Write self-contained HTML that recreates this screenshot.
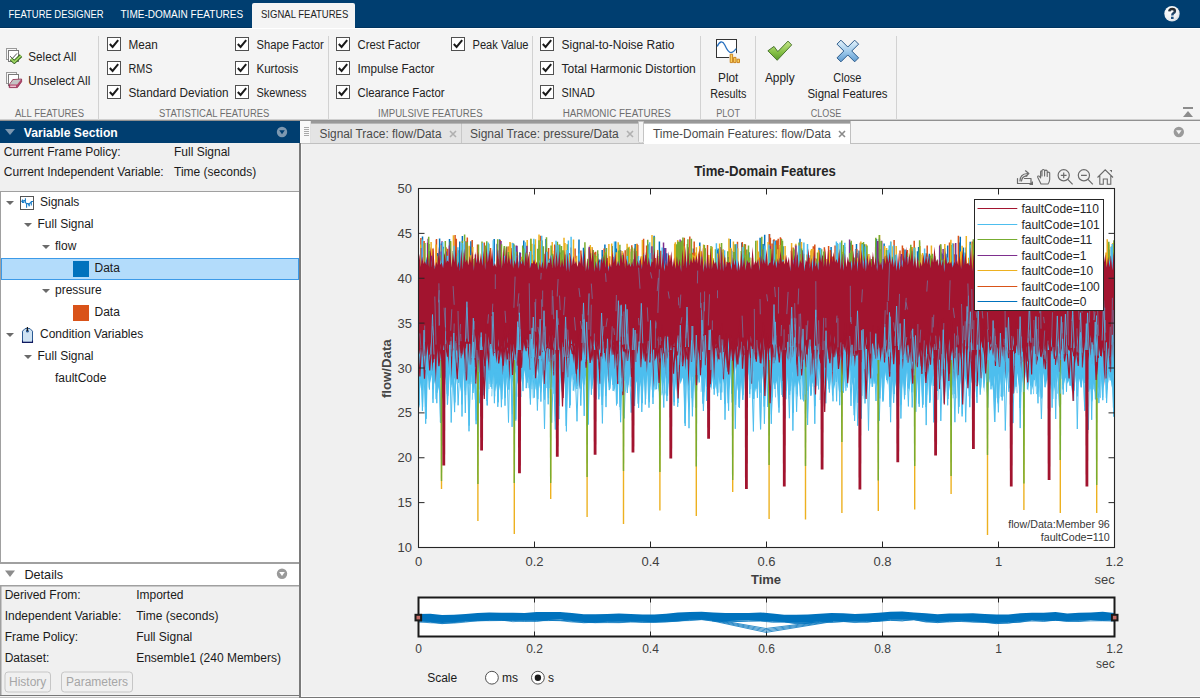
<!DOCTYPE html>
<html><head><meta charset="utf-8"><title>Feature Designer</title>
<style>html,body{margin:0;padding:0;width:1200px;height:698px;overflow:hidden;background:#f0f0f0}svg{display:block}text{font-family:"Liberation Sans",sans-serif}</style>
</head><body>
<svg width="1200" height="698" viewBox="0 0 1200 698">
<defs><clipPath id="axclip"><rect x="418.5" y="188.5" width="696" height="359"/></clipPath></defs>
<rect x="0" y="0" width="1200" height="698" fill="#f0f0f0"/>
<rect x="0" y="0" width="1200" height="28" fill="#003e70"/>
<rect x="0" y="27" width="1200" height="1" fill="#00345f"/>
<rect x="0" y="28" width="1200" height="1" fill="#ffffff"/>
<text x="8.5" y="18" font-size="11" fill="#ffffff" textLength="95" lengthAdjust="spacingAndGlyphs">FEATURE DESIGNER</text>
<text x="120.5" y="18" font-size="11" fill="#ffffff" textLength="122.7" lengthAdjust="spacingAndGlyphs">TIME-DOMAIN FEATURES</text>
<path d="M252 28 V5 Q252 3 254 3 H353 Q355 3 355 5 V28 Z" fill="#f4f4f4"/>
<text x="261" y="18" font-size="11" fill="#222" textLength="87.3" lengthAdjust="spacingAndGlyphs">SIGNAL FEATURES</text>
<defs><radialGradient id="gH" cx="0.4" cy="0.35" r="0.7"><stop offset="0" stop-color="#ffffff"/><stop offset="0.7" stop-color="#eef0f2"/><stop offset="1" stop-color="#cfd8e0"/></radialGradient><linearGradient id="gQ" x1="0" y1="0" x2="0" y2="1"><stop offset="0" stop-color="#2a2a2a"/><stop offset="1" stop-color="#1d4f80"/></linearGradient></defs>
<circle cx="1172" cy="13.8" r="7.7" fill="url(#gH)"/>
<path d="M1169.3 11.4 Q1169.5 8.9 1172.2 8.9 Q1174.9 8.9 1174.9 11 Q1174.9 12.4 1173.4 13.3 Q1172.3 14 1172.3 15.4" fill="none" stroke="url(#gQ)" stroke-width="2.5"/>
<rect x="1171" y="16.7" width="2.6" height="2.3" fill="#1d4f80"/>
<rect x="0" y="29" width="1200" height="91" fill="#f4f4f4"/>
<rect x="0" y="119.7" width="1200" height="1.1" fill="#7a7a7a"/>
<rect x="98" y="36" width="1" height="84" fill="#d2d2d2"/>
<rect x="328" y="36" width="1" height="84" fill="#d2d2d2"/>
<rect x="532" y="36" width="1" height="84" fill="#d2d2d2"/>
<rect x="700" y="36" width="1" height="84" fill="#d2d2d2"/>
<rect x="755" y="36" width="1" height="84" fill="#d2d2d2"/>
<rect x="896" y="36" width="1" height="84" fill="#d2d2d2"/>
<rect x="107.5" y="37.5" width="13" height="13" fill="#ffffff" stroke="#505050" stroke-width="1"/>
<path d="M109.8 44 L112.6 47 L118.2 40.2" fill="none" stroke="#1a1a1a" stroke-width="2"/>
<text x="128.5" y="49" font-size="12" fill="#222" textLength="29.3" lengthAdjust="spacingAndGlyphs">Mean</text>
<rect x="107.5" y="61.5" width="13" height="13" fill="#ffffff" stroke="#505050" stroke-width="1"/>
<path d="M109.8 68 L112.6 71 L118.2 64.2" fill="none" stroke="#1a1a1a" stroke-width="2"/>
<text x="128.5" y="73" font-size="12" fill="#222" textLength="24" lengthAdjust="spacingAndGlyphs">RMS</text>
<rect x="107.5" y="85.5" width="13" height="13" fill="#ffffff" stroke="#505050" stroke-width="1"/>
<path d="M109.8 92 L112.6 95 L118.2 88.2" fill="none" stroke="#1a1a1a" stroke-width="2"/>
<text x="128.5" y="97" font-size="12" fill="#222" textLength="100" lengthAdjust="spacingAndGlyphs">Standard Deviation</text>
<rect x="235.5" y="37.5" width="13" height="13" fill="#ffffff" stroke="#505050" stroke-width="1"/>
<path d="M237.8 44 L240.6 47 L246.2 40.2" fill="none" stroke="#1a1a1a" stroke-width="2"/>
<text x="256.5" y="49" font-size="12" fill="#222" textLength="67.3" lengthAdjust="spacingAndGlyphs">Shape Factor</text>
<rect x="235.5" y="61.5" width="13" height="13" fill="#ffffff" stroke="#505050" stroke-width="1"/>
<path d="M237.8 68 L240.6 71 L246.2 64.2" fill="none" stroke="#1a1a1a" stroke-width="2"/>
<text x="256.5" y="73" font-size="12" fill="#222" textLength="41.7" lengthAdjust="spacingAndGlyphs">Kurtosis</text>
<rect x="235.5" y="85.5" width="13" height="13" fill="#ffffff" stroke="#505050" stroke-width="1"/>
<path d="M237.8 92 L240.6 95 L246.2 88.2" fill="none" stroke="#1a1a1a" stroke-width="2"/>
<text x="256.5" y="97" font-size="12" fill="#222" textLength="50" lengthAdjust="spacingAndGlyphs">Skewness</text>
<rect x="336.5" y="37.5" width="13" height="13" fill="#ffffff" stroke="#505050" stroke-width="1"/>
<path d="M338.8 44 L341.6 47 L347.2 40.2" fill="none" stroke="#1a1a1a" stroke-width="2"/>
<text x="357.5" y="49" font-size="12" fill="#222" textLength="62.5" lengthAdjust="spacingAndGlyphs">Crest Factor</text>
<rect x="336.5" y="61.5" width="13" height="13" fill="#ffffff" stroke="#505050" stroke-width="1"/>
<path d="M338.8 68 L341.6 71 L347.2 64.2" fill="none" stroke="#1a1a1a" stroke-width="2"/>
<text x="357.5" y="73" font-size="12" fill="#222" textLength="77" lengthAdjust="spacingAndGlyphs">Impulse Factor</text>
<rect x="336.5" y="85.5" width="13" height="13" fill="#ffffff" stroke="#505050" stroke-width="1"/>
<path d="M338.8 92 L341.6 95 L347.2 88.2" fill="none" stroke="#1a1a1a" stroke-width="2"/>
<text x="357.5" y="97" font-size="12" fill="#222" textLength="87" lengthAdjust="spacingAndGlyphs">Clearance Factor</text>
<rect x="451.5" y="37.5" width="13" height="13" fill="#ffffff" stroke="#505050" stroke-width="1"/>
<path d="M453.8 44 L456.6 47 L462.2 40.2" fill="none" stroke="#1a1a1a" stroke-width="2"/>
<text x="472.5" y="49" font-size="12" fill="#222" textLength="56" lengthAdjust="spacingAndGlyphs">Peak Value</text>
<rect x="540.5" y="37.5" width="13" height="13" fill="#ffffff" stroke="#505050" stroke-width="1"/>
<path d="M542.8 44 L545.6 47 L551.2 40.2" fill="none" stroke="#1a1a1a" stroke-width="2"/>
<text x="561.5" y="49" font-size="12" fill="#222" textLength="113" lengthAdjust="spacingAndGlyphs">Signal-to-Noise Ratio</text>
<rect x="540.5" y="61.5" width="13" height="13" fill="#ffffff" stroke="#505050" stroke-width="1"/>
<path d="M542.8 68 L545.6 71 L551.2 64.2" fill="none" stroke="#1a1a1a" stroke-width="2"/>
<text x="561.5" y="73" font-size="12" fill="#222" textLength="134.3" lengthAdjust="spacingAndGlyphs">Total Harmonic Distortion</text>
<rect x="540.5" y="85.5" width="13" height="13" fill="#ffffff" stroke="#505050" stroke-width="1"/>
<path d="M542.8 92 L545.6 95 L551.2 88.2" fill="none" stroke="#1a1a1a" stroke-width="2"/>
<text x="561.5" y="97" font-size="12" fill="#222" textLength="33.3" lengthAdjust="spacingAndGlyphs">SINAD</text>
<text x="49.5" y="116.7" font-size="10" fill="#6e6e6e" text-anchor="middle" textLength="69" lengthAdjust="spacingAndGlyphs">ALL FEATURES</text>
<text x="214.2" y="116.7" font-size="10" fill="#6e6e6e" text-anchor="middle" textLength="110.3" lengthAdjust="spacingAndGlyphs">STATISTICAL FEATURES</text>
<text x="430.3" y="116.7" font-size="10" fill="#6e6e6e" text-anchor="middle" textLength="104.5" lengthAdjust="spacingAndGlyphs">IMPULSIVE FEATURES</text>
<text x="616.8" y="116.7" font-size="10" fill="#6e6e6e" text-anchor="middle" textLength="108.3" lengthAdjust="spacingAndGlyphs">HARMONIC FEATURES</text>
<text x="728.1" y="116.7" font-size="10" fill="#6e6e6e" text-anchor="middle" textLength="23.8" lengthAdjust="spacingAndGlyphs">PLOT</text>
<text x="826" y="116.7" font-size="10" fill="#6e6e6e" text-anchor="middle" textLength="30.5" lengthAdjust="spacingAndGlyphs">CLOSE</text>
<text x="28.3" y="60.5" font-size="12" fill="#222" textLength="48" lengthAdjust="spacingAndGlyphs">Select All</text>
<text x="28.3" y="84.5" font-size="12" fill="#222" textLength="62" lengthAdjust="spacingAndGlyphs">Unselect All</text>
<text x="728.2" y="82" font-size="12" fill="#222" text-anchor="middle" textLength="20.3" lengthAdjust="spacingAndGlyphs">Plot</text>
<text x="728.3" y="98" font-size="12" fill="#222" text-anchor="middle" textLength="36" lengthAdjust="spacingAndGlyphs">Results</text>
<text x="779.8" y="82" font-size="12" fill="#222" text-anchor="middle" textLength="29.7" lengthAdjust="spacingAndGlyphs">Apply</text>
<text x="847.3" y="82" font-size="12" fill="#222" text-anchor="middle" textLength="28" lengthAdjust="spacingAndGlyphs">Close</text>
<text x="847.5" y="98" font-size="12" fill="#222" text-anchor="middle" textLength="80" lengthAdjust="spacingAndGlyphs">Signal Features</text>
<rect x="6.5" y="48.5" width="10" height="11" fill="#f8f8f8" stroke="#9a9a9a"/>
<rect x="8.5" y="50.5" width="10" height="11" fill="#ffffff" stroke="#7a7a7a"/>
<path d="M10 56.2 L12.4 58.4 L17 53.4" fill="none" stroke="#555" stroke-width="1"/>
<path d="M11 59 L14.3 62 L21 55.6" fill="none" stroke="#2f5e1a" stroke-width="3.6" stroke-linejoin="round"/>
<path d="M11 59 L14.3 62 L21 55.6" fill="none" stroke="#9ed462" stroke-width="1.8" stroke-linejoin="round"/>
<rect x="6.5" y="72.5" width="10" height="11" fill="#f8f8f8" stroke="#9a9a9a"/>
<rect x="8.5" y="74.5" width="10" height="11" fill="#ffffff" stroke="#7a7a7a"/>
<path d="M9.2 84.8 L12.8 79.6 L21.6 79 L21.6 81.8 L17.4 87.6 L9.2 87.6 Z" fill="#b5476c" stroke="#8a2a4c" stroke-width="0.8" stroke-linejoin="round"/>
<path d="M9.6 84.6 L13 80 L21 79.4 L17.2 84.6 Z" fill="#c4c4c4"/>
<path d="M10.2 85.6 H16 V86.9 H10.2 Z" fill="#f3d2dc"/>
<defs><linearGradient id="gX" x1="0" y1="0" x2="0" y2="1"><stop offset="0" stop-color="#e6f3fb"/><stop offset="0.55" stop-color="#9cc8ea"/><stop offset="1" stop-color="#5f9bd0"/></linearGradient><linearGradient id="gC" x1="0" y1="0" x2="0" y2="1"><stop offset="0" stop-color="#c8e68a"/><stop offset="0.6" stop-color="#84bf45"/><stop offset="1" stop-color="#5a9a2a"/></linearGradient></defs>
<rect x="716.5" y="39.5" width="20" height="18" fill="#ffffff" stroke="#333" stroke-width="1"/>
<path d="M717.2 46.6 C719.5 41, 722.5 40.5, 724.8 45 C727 50, 729 53.5, 731.8 52.4 C733.8 51.6, 735 50.2, 736.3 48.6" fill="none" stroke="#2a72c0" stroke-width="1.3"/>
<rect x="729.2" y="53.2" width="11.5" height="10.2" fill="#f4f4f4"/>
<path d="M730.2 54.2 H732.6 V62.6 H730.2 Z M733.6 57.4 H736 V62.6 H733.6 Z M737 59.2 H739.5 V62.6 H737 Z" fill="#f8d060" stroke="#c67a12" stroke-width="0.9"/>
<path d="M767.9 50.8 L774 46.4 L777.8 51.6 L788 41.1 L791.7 44.9 L777.2 60.3 Z" fill="url(#gC)" stroke="#3d6b22" stroke-width="0.9" stroke-linejoin="round"/>
<polygon points="847.80,54.96 854.66,61.82 858.62,57.86 851.76,51.00 858.62,44.14 854.66,40.18 847.80,47.04 840.94,40.18 836.98,44.14 843.84,51.00 836.98,57.86 840.94,61.82" fill="url(#gX)" stroke="#2c5a8a" stroke-width="1" stroke-linejoin="round"/>
<rect x="1183" y="107" width="10" height="2" fill="#8c8c8c"/>
<path d="M1183 117 L1188 111 L1193 117 Z" fill="#8c8c8c"/>
<rect x="0" y="121" width="300" height="22" fill="#003e70"/>
<path d="M5 129 L15 129 L10 135 Z" fill="#7b97b0"/>
<text x="23.8" y="136.8" font-size="13.4" fill="#ffffff" font-weight="bold" textLength="94" lengthAdjust="spacingAndGlyphs">Variable Section</text>
<circle cx="282" cy="132" r="5.2" fill="#7d98b0"/>
<path d="M279.2 130.2 L284.8 130.2 L282 134.3 Z" fill="#003e70"/>
<rect x="0" y="143" width="300" height="48" fill="#f0f0f0"/>
<text x="3.8" y="155.6" font-size="12" fill="#1a1a1a">Current Frame Policy:</text>
<text x="174" y="155.6" font-size="12" fill="#1a1a1a">Full Signal</text>
<text x="3.8" y="176.3" font-size="12" fill="#1a1a1a">Current Independent Variable:</text>
<text x="174" y="176.3" font-size="12" fill="#1a1a1a">Time (seconds)</text>
<rect x="0" y="191" width="299" height="373" fill="#ffffff"/>
<rect x="0" y="191" width="299" height="1" fill="#a0a0a0"/>
<rect x="0" y="191" width="1" height="373" fill="#a0a0a0"/>
<rect x="0" y="562" width="300" height="2" fill="#a0a0a0"/>
<rect x="1.5" y="258.5" width="297" height="21" fill="#b3dcfb" stroke="#3c9ae8" stroke-width="1"/>
<path d="M6 201 L14 201 L10 205 Z" fill="#6a6a6a"/>
<text x="40" y="205.6" font-size="12" fill="#1a1a1a">Signals</text>
<rect x="20.5" y="196.5" width="13" height="13" fill="#fff" stroke="#555"/>
<path d="M21 201.3 H22.5 V199.6 V202.5 H23.8 V200.6 H25.4 V198.2 V202.3 L26.6 204 V207.7 V203.6 H28.2 L29.3 206.3 V203.8 L30.6 202.6 H31.3 V205.4 V201.5 H33" fill="none" stroke="#1a7dc8" stroke-width="1.1"/>
<path d="M24 223 L32 223 L28 227 Z" fill="#6a6a6a"/>
<text x="37.5" y="227.6" font-size="12" fill="#1a1a1a">Full Signal</text>
<path d="M42 245 L50 245 L46 249 Z" fill="#6a6a6a"/>
<text x="55" y="249.5" font-size="12" fill="#1a1a1a">flow</text>
<rect x="73" y="261" width="16" height="16" fill="#0072bd"/>
<text x="94.5" y="271.5" font-size="12" fill="#1a1a1a">Data</text>
<path d="M42 289 L50 289 L46 293 Z" fill="#6a6a6a"/>
<text x="55" y="293.5" font-size="12" fill="#1a1a1a">pressure</text>
<rect x="73" y="305" width="16" height="16" fill="#d95319"/>
<text x="94.5" y="315.5" font-size="12" fill="#1a1a1a">Data</text>
<path d="M6 333 L14 333 L10 337 Z" fill="#6a6a6a"/>
<path d="M22.5 331.2 L25 328.6 H30 L32.5 331.2 V342.4 H22.5 Z" fill="#cfe3f3" stroke="#2a5a94" stroke-width="1"/>
<path d="M22.5 340.5 V342.4 H32.5 V340.5" fill="none" stroke="#101a60" stroke-width="1.1"/>
<circle cx="27.4" cy="331.2" r="1.4" fill="#2a5a94"/>
<path d="M27.4 327 V331" stroke="#1a1a1a" stroke-width="1.3"/>
<text x="40" y="337.5" font-size="12" fill="#1a1a1a">Condition Variables</text>
<path d="M24 355 L32 355 L28 359 Z" fill="#6a6a6a"/>
<text x="37.5" y="359.5" font-size="12" fill="#1a1a1a">Full Signal</text>
<text x="55" y="381.5" font-size="12" fill="#1a1a1a">faultCode</text>
<rect x="0" y="564" width="300" height="22" fill="#ffffff"/>
<path d="M5 570.5 L15 570.5 L10 577 Z" fill="#8c8c8c"/>
<text x="24.4" y="578.6" font-size="13" fill="#1a1a1a" textLength="38.7" lengthAdjust="spacingAndGlyphs">Details</text>
<circle cx="282" cy="573.8" r="5.2" fill="#9a9a9a"/>
<path d="M279.2 572 L284.8 572 L282 576.1 Z" fill="#ffffff"/>
<rect x="0" y="585" width="300" height="113" fill="#f0f0f0"/>
<rect x="0" y="585" width="300" height="1.5" fill="#a0a0a0"/>
<rect x="0" y="585" width="1.5" height="111" fill="#a0a0a0"/>
<rect x="0" y="695" width="299" height="1" fill="#777777"/>
<rect x="0" y="696" width="299" height="1" fill="#f4f4f4"/>
<rect x="0" y="697" width="299" height="1" fill="#c4c4c4"/>
<text x="4.7" y="598.7" font-size="12" fill="#1a1a1a">Derived From:</text>
<text x="136.2" y="598.7" font-size="12" fill="#1a1a1a">Imported</text>
<text x="4.7" y="619.7" font-size="12" fill="#1a1a1a">Independent Variable:</text>
<text x="136.2" y="619.7" font-size="12" fill="#1a1a1a">Time (seconds)</text>
<text x="4.7" y="640.7" font-size="12" fill="#1a1a1a">Frame Policy:</text>
<text x="136.2" y="640.7" font-size="12" fill="#1a1a1a">Full Signal</text>
<text x="4.7" y="661.7" font-size="12" fill="#1a1a1a">Dataset:</text>
<text x="136.2" y="661.7" font-size="12" fill="#1a1a1a">Ensemble1 (240 Members)</text>
<rect x="5" y="672" width="45.5" height="20" rx="3" fill="#f0f0f0" stroke="#c6c6c6"/>
<text x="27.7" y="686" font-size="12" fill="#a6a6a6" text-anchor="middle">History</text>
<rect x="61.5" y="672" width="71" height="20" rx="3" fill="#f0f0f0" stroke="#c6c6c6"/>
<text x="97" y="686" font-size="12" fill="#a6a6a6" text-anchor="middle">Parameters</text>
<rect x="299" y="143" width="2" height="555" fill="#7a7a7a"/>
<rect x="300" y="121" width="900" height="22" fill="#f4f4f4"/>
<rect x="300" y="121" width="11" height="22" fill="#f8f8f8"/>
<rect x="310" y="121" width="1" height="22" fill="#e0e0e0"/>
<rect x="304" y="127" width="5" height="1" fill="#a8a8a8"/>
<rect x="304" y="129" width="5" height="1" fill="#a8a8a8"/>
<rect x="304" y="131" width="5" height="1" fill="#a8a8a8"/>
<rect x="304" y="133" width="5" height="1" fill="#a8a8a8"/>
<rect x="304" y="135" width="5" height="1" fill="#a8a8a8"/>
<rect x="311" y="123" width="150" height="20" fill="#e4e4e4"/>
<rect x="461" y="121" width="1" height="22" fill="#c8c8c8"/>
<rect x="462" y="123" width="176" height="20" fill="#e4e4e4"/>
<rect x="643.5" y="123.5" width="206.5" height="20" fill="#ffffff"/>
<rect x="850" y="121" width="1" height="22" fill="#c0c0c0"/>
<rect x="311" y="120.8" width="539" height="2.8" fill="#999999"/>
<path d="M638.5 121.5 V141.5 Q638.5 143 640 143 H642 Q643.5 143 643.5 141.5 V121.5 Z" fill="#f4f4f4" stroke="#c4c4c4" stroke-width="1"/>
<rect x="301" y="143" width="899" height="1" fill="#c0c0c0"/>
<rect x="644" y="143" width="206" height="1" fill="#ffffff"/>
<text x="319.5" y="137.5" font-size="12" fill="#4a4a4a" textLength="122" lengthAdjust="spacingAndGlyphs">Signal Trace: flow/Data</text>
<text x="470" y="137.5" font-size="12" fill="#4a4a4a">Signal Trace: pressure/Data</text>
<text x="653" y="137.5" font-size="12" fill="#4a4a4a" textLength="178" lengthAdjust="spacingAndGlyphs">Time-Domain Features: flow/Data</text>
<path d="M450 131 L456 137 M456 131 L450 137" stroke="#b0b0b0" stroke-width="1.6"/>
<path d="M627 131 L633 137 M633 131 L627 137" stroke="#b0b0b0" stroke-width="1.6"/>
<path d="M839 131 L845 137 M845 131 L839 137" stroke="#8a8a8a" stroke-width="1.6"/>
<circle cx="1178.8" cy="132" r="5.2" fill="#9a9a9a"/>
<path d="M1176 130.2 L1181.6 130.2 L1178.8 134.3 Z" fill="#f4f4f4"/>
<rect x="301" y="144" width="899" height="552" fill="#f0f0f0"/>
<rect x="301" y="144" width="1" height="552" fill="#f8f8f8"/>
<rect x="301" y="696" width="899" height="1" fill="#fafafa"/>
<rect x="301" y="697" width="899" height="1" fill="#777777"/>
<rect x="418.5" y="188.5" width="696.0" height="359.0" fill="#ffffff"/>
<g clip-path="url(#axclip)"><path d="M627.4 300L627.1 249.0M990.1 300L990.0 242.9M1056.8 300L1056.9 258.9M776.3 300L776.2 247.2M764.3 300L764.7 234.7M426.7 300L426.9 259.4M900.2 300L900.5 256.6M675.7 300L675.8 248.0M773.3 300L773.5 240.0M795.1 300L795.5 255.5M771.9 300L771.5 253.8M459.7 300L459.8 241.5M643.3 300L643.1 260.4M1099.7 300L1099.9 240.9M839.6 300L839.4 260.9M1026.9 300L1027.1 252.0M1047.6 300L1047.5 256.3M519.7 300L519.9 252.3M1028.3 300L1028.5 264.8M799.7 300L800.0 238.7M642.7 300L643.0 244.0M439.6 300L439.6 238.6M876.3 300L876.5 239.0M779.8 300L779.5 247.6M1051.3 300L1051.0 259.8M523.6 300L523.8 240.5M775.6 300L775.9 240.4M671.2 300L671.4 262.1M659.4 300L659.4 241.5M1078.4 300L1078.5 242.8M777.3 300L777.5 258.5M822.6 300L822.7 255.8M466.3 300L466.2 257.1M717.8 300L718.1 248.5M917.6 300L917.5 251.2M877.4 300L877.7 251.8M855.7 300L855.9 248.9M876.5 300L876.7 253.9M551.6 300L551.9 249.9M976.5 300L976.8 259.2M497.0 300L497.3 243.7M1019.0 300L1019.0 257.6M1022.1 300L1022.0 264.0M437.1 300L437.3 253.0M810.8 300L811.2 261.4M736.2 300L736.3 249.8M511.6 300L511.2 248.6M590.7 300L590.3 260.8M1049.3 300L1049.3 257.4M958.9 300L959.2 247.7M993.2 300L993.5 252.0M959.4 300L959.3 242.6M693.4 300L693.4 248.5M920.5 300L920.5 255.0M996.6 300L996.3 254.9M1058.4 300L1058.0 247.0M947.7 300L947.7 245.4M499.8 300L499.8 257.0M635.8 300L636.1 253.2M1056.3 300L1056.0 265.9M615.4 300L615.7 241.6M1026.4 300L1026.2 259.6M543.3 300L543.4 252.7M513.4 300L513.5 243.4M1055.3 300L1055.0 247.8M583.1 300L583.5 247.7M742.2 300L742.6 245.4M1058.4 300L1058.8 256.8M833.8 300L833.4 257.8M647.8 300L647.9 244.2M819.0 300L819.1 247.7M720.2 300L720.5 263.4M802.5 300L802.2 250.2M925.1 300L924.8 263.6M810.2 300L810.5 264.2M806.9 300L806.8 260.4M733.7 300L733.3 250.7M831.4 300L831.1 247.0M1030.1 300L1030.2 263.5M940.7 300L940.7 252.0M850.3 300L850.5 242.5M683.3 300L683.5 256.8M944.3 300L943.9 255.2M769.0 300L769.4 234.0M653.8 300L654.1 235.8M965.0 300L965.4 252.5M729.8 300L730.0 252.3M890.2 300L890.1 262.3M546.2 300L546.0 239.0M762.7 300L763.0 244.1M994.8 300L994.8 243.8M728.4 300L728.3 262.0M589.8 300L590.0 248.7M866.3 300L866.4 260.6M680.6 300L680.8 245.6M598.2 300L598.3 268.9M857.7 300L857.7 253.0M619.7 300L620.0 257.4M723.1 300L723.0 252.4M539.4 300L539.2 244.9M748.6 300L749.0 252.3M429.0 300L429.3 251.1M970.0 300L970.2 241.7M546.6 300L546.3 243.3M883.7 300L883.3 259.1M452.9 300L453.3 251.0M956.0 300L956.3 254.5M996.8 300L996.7 239.4M711.6 300L711.7 255.6M944.3 300L944.0 256.6M730.0 300L729.9 259.0M604.7 300L604.9 244.6M985.8 300L985.7 251.8M443.0 300L443.3 246.7M856.2 300L856.5 244.1M622.4 300L622.1 255.4M688.2 300L688.3 247.8M561.0 300L560.9 252.5M612.5 300L612.2 246.1M730.4 300L730.2 239.1M462.4 300L462.4 236.0M816.8 300L817.1 258.9M832.5 300L832.7 268.0M947.5 300L947.1 261.6M602.9 300L602.5 254.4M984.1 300L984.5 242.4M942.1 300L942.1 253.4M556.4 300L556.5 259.6M760.2 300L760.1 237.8M929.1 300L929.4 253.7M699.0 300L699.0 258.8M807.7 300L807.8 263.2M1061.5 300L1061.3 256.7M449.3 300L449.5 238.9M783.2 300L783.0 246.3M664.6 300L664.3 248.1M499.5 300L499.6 239.3M634.9 300L635.2 244.1M427.4 300L427.2 257.4M531.5 300L531.3 249.4M616.5 300L616.3 248.5M666.6 300L666.7 253.2M596.6 300L596.8 266.9M1095.5 300L1095.2 250.5M441.5 300L441.5 243.5M465.2 300L465.2 243.2M963.7 300L963.4 247.5M1108.9 300L1109.0 253.2M1076.7 300L1076.6 251.4M746.5 300L746.2 255.6M578.7 300L579.0 239.4M945.0 300L944.7 248.3M699.9 300L699.8 242.5M910.3 300L910.4 259.9M1093.4 300L1093.4 253.5M471.3 300L470.9 241.2M559.4 300L559.7 262.3M467.5 300L467.3 255.0M440.0 300L439.9 255.5M1063.6 300L1064.0 240.0M639.9 300L640.2 263.2M488.4 300L488.7 251.2M652.0 300L651.9 250.2M599.7 300L599.9 259.4M864.4 300L864.7 244.3M465.0 300L464.8 243.1M508.3 300L508.7 256.2M983.8 300L983.4 256.4M965.9 300L966.1 247.4M443.1 300L442.9 258.6M926.5 300L926.2 253.2M428.3 300L428.0 255.5M904.6 300L905.0 249.5M553.8 300L553.5 259.3M1097.2 300L1097.5 251.5M716.9 300L716.7 250.1M980.3 300L980.2 242.3M682.3 300L682.1 258.0M598.3 300L598.7 260.8M884.4 300L884.1 243.5M1029.5 300L1029.8 250.4M851.3 300L851.2 245.2M558.0 300L558.4 249.8M602.0 300L602.2 250.1M549.8 300L549.6 258.7M824.5 300L824.5 257.9M590.0 300L589.7 261.2M918.7 300L918.6 247.1M1029.0 300L1028.7 254.3M1108.0 300L1108.2 242.6M494.1 300L494.2 239.0M982.9 300L982.7 240.3M810.7 300L810.3 255.2M597.4 300L597.7 253.8M742.1 300L741.8 242.7M1110.7 300L1110.6 256.3M469.9 300L469.5 246.4M547.6 300L547.5 252.1M630.6 300L630.5 268.0M647.4 300L647.4 252.7M422.6 300L422.5 236.6M1087.1 300L1086.9 257.7M960.1 300L960.3 236.8M731.1 300L731.0 248.8" stroke="#0072bd" stroke-width="1.5" fill="none"/>
<path d="M1043.0 300L1042.8 250.1M958.4 300L958.4 235.7M575.2 300L575.1 248.5M1026.5 300L1026.7 262.2M595.9 300L595.6 251.8M530.0 300L529.9 251.9M776.9 300L776.8 240.4M421.1 300L420.9 237.9M834.8 300L835.1 245.6M986.7 300L986.6 257.3M523.4 300L523.4 261.7M698.6 300L698.6 253.6M1092.1 300L1092.4 240.8M886.0 300L885.8 255.8M510.1 300L510.4 263.9M815.0 300L815.4 260.0M1064.3 300L1064.1 240.0M544.2 300L543.9 254.0M1033.8 300L1034.0 261.2M445.0 300L444.8 254.5M894.3 300L894.1 239.9M422.1 300L421.8 251.5M923.7 300L923.8 264.3M556.7 300L557.0 249.8M655.2 300L655.5 258.0M607.5 300L607.6 260.7M781.2 300L781.2 238.5M1029.7 300L1030.1 240.9M1060.7 300L1060.9 255.8M780.1 300L780.4 237.2M856.7 300L856.9 249.2M1055.7 300L1055.8 257.3M832.4 300L832.6 256.4M860.6 300L860.3 242.8M950.3 300L950.1 247.2M1029.4 300L1029.0 247.9M432.6 300L432.9 248.5M594.4 300L594.8 252.4M813.2 300L813.3 246.2M433.2 300L432.9 259.5M634.7 300L634.4 250.7M1071.6 300L1071.5 244.8M793.2 300L793.1 247.6M555.8 300L555.6 245.5M646.2 300L645.9 255.2M594.4 300L594.5 260.1M488.9 300L489.1 256.1M568.2 300L567.8 249.2M949.7 300L949.5 242.5M511.2 300L511.1 247.9M631.8 300L631.8 245.3M679.8 300L679.8 242.2M913.3 300L913.2 259.1M603.8 300L604.1 248.4M1042.5 300L1042.4 244.2M546.8 300L546.6 255.4M796.0 300L796.2 257.0M684.0 300L684.3 237.7M514.4 300L514.7 254.0M1109.6 300L1109.3 249.6M818.7 300L818.4 265.0M940.8 300L940.7 247.4M1054.9 300L1055.3 256.0M953.8 300L953.9 258.8M636.9 300L637.0 243.7M692.8 300L692.7 252.7M777.7 300L778.1 240.0M791.7 300L791.4 250.7M1100.3 300L1100.3 241.3M911.1 300L911.2 246.9M930.5 300L930.8 267.0M628.4 300L628.7 260.4M977.9 300L977.8 245.6M976.6 300L976.4 259.7M1080.1 300L1080.5 243.1M707.4 300L707.4 257.6M900.2 300L900.0 250.5M953.8 300L953.6 243.6M703.2 300L703.5 261.3M919.9 300L920.2 253.8M477.5 300L477.5 244.5M446.1 300L446.0 247.2M554.6 300L554.7 254.0M742.7 300L743.1 251.0M694.2 300L694.2 241.4M994.0 300L994.2 234.0M683.6 300L684.0 242.8M824.7 300L824.9 263.8M622.4 300L622.4 252.9M677.2 300L676.9 258.4M737.3 300L737.5 241.7M954.8 300L955.0 254.3M458.0 300L458.3 250.2M928.5 300L928.3 263.7M783.7 300L783.4 255.5M559.9 300L560.0 257.8M465.5 300L465.7 241.3M712.9 300L712.5 261.4M554.6 300L554.7 244.4M513.8 300L513.6 265.3M759.0 300L759.4 257.6M436.5 300L436.3 240.0M737.4 300L737.1 258.3M498.1 300L498.3 258.8M637.9 300L637.7 245.1M441.1 300L441.0 256.9M815.3 300L815.0 260.3M652.8 300L652.7 254.7M630.0 300L629.7 248.8M1043.9 300L1043.7 257.2M907.4 300L907.4 250.0M500.3 300L500.2 240.1M1007.7 300L1007.9 240.2M609.4 300L609.7 256.2M735.0 300L735.0 256.1M945.9 300L945.5 264.8M681.8 300L682.1 252.9M436.9 300L436.7 260.3M1088.7 300L1088.6 240.5M927.1 300L927.2 245.5M472.1 300L472.2 240.1M607.2 300L607.1 258.0M470.8 300L470.7 260.6M978.5 300L978.6 249.5M1092.6 300L1092.6 257.0M643.7 300L643.6 238.8M816.0 300L815.9 258.5M828.6 300L828.6 246.1M677.6 300L677.4 251.2M745.3 300L745.4 244.2M1059.9 300L1059.9 253.2M467.3 300L467.3 237.5M772.0 300L772.1 243.4M533.6 300L533.9 258.5M455.0 300L455.1 235.1M569.2 300L569.1 253.1M742.0 300L742.3 242.0M944.1 300L943.8 258.6M1057.5 300L1057.7 256.9M723.3 300L723.2 249.5M508.2 300L508.1 246.5M490.3 300L490.5 248.1M1057.6 300L1057.7 243.7M704.6 300L705.0 248.0M701.0 300L701.3 258.4M581.2 300L580.9 250.5M678.9 300L678.9 243.2M548.4 300L548.6 248.1M903.7 300L903.4 248.2M660.9 300L660.9 250.8M525.8 300L526.2 251.0M1108.0 300L1107.8 245.0M448.0 300L447.7 248.7M646.7 300L646.6 245.6M801.3 300L801.2 254.0M483.4 300L483.2 262.3M571.1 300L571.0 247.4M436.2 300L436.5 239.0M859.2 300L859.2 250.7M650.3 300L650.3 257.0M972.5 300L972.2 241.6M824.7 300L824.4 247.2M1099.0 300L1099.3 238.4M424.2 300L424.1 241.0M726.6 300L727.0 261.7M914.4 300L914.2 240.8M1042.6 300L1042.7 258.8M639.0 300L639.1 260.5M1072.1 300L1071.8 238.3M769.3 300L768.9 256.8M450.4 300L450.4 242.3M1107.8 300L1107.5 260.9M456.4 300L456.3 238.8M1080.6 300L1080.3 254.3M1078.8 300L1078.7 248.4M702.1 300L702.1 263.9M999.0 300L998.8 252.8M852.6 300L852.5 244.8M746.4 300L746.4 256.5M458.1 300L458.3 254.2M794.4 300L794.0 249.7M769.1 300L769.5 234.0M742.4 300L742.4 247.2M1016.8 300L1017.1 258.3M620.2 300L619.8 250.8M1093.7 300L1093.4 242.7M781.3 300L781.0 253.0M780.0 300L780.4 248.9M881.1 300L881.0 249.3M770.1 300L770.4 237.7M484.2 300L484.3 242.6M830.8 300L830.5 250.1M809.7 300L809.6 257.7M690.0 300L689.8 236.5M774.1 300L774.0 239.2M707.3 300L707.5 244.9M540.8 300L540.4 235.7M777.9 300L778.2 238.7M902.4 300L902.4 245.6M800.5 300L800.4 259.7M1070.3 300L1070.5 258.8M815.0 300L814.8 244.6M1023.9 300L1024.1 253.8M940.5 300L940.4 244.5M625.2 300L625.2 250.3" stroke="#d95319" stroke-width="1.5" fill="none"/>
<path d="M853.6 300L853.3 262.7M629.4 300L629.2 246.8M612.3 300L612.6 264.6M1111.4 300L1111.4 246.2M1106.8 300L1106.8 261.2M856.4 300L856.7 262.5M552.4 300L552.7 250.7M669.9 300L669.7 255.3M688.3 300L688.7 247.6M829.1 300L828.7 261.1M889.3 300L889.4 249.2M1006.7 300L1006.5 248.4M802.9 300L802.7 260.1M815.0 300L815.0 259.2M744.0 300L744.1 253.6M436.0 300L436.0 244.5M677.5 300L677.7 240.0M1091.6 300L1092.0 241.9M829.3 300L829.1 259.0M951.1 300L950.9 239.8M710.1 300L710.1 263.3M576.1 300L576.0 258.2M1100.9 300L1100.7 248.7M695.7 300L695.7 252.5M496.7 300L496.9 255.5M838.7 300L839.1 258.2M752.0 300L752.4 258.0M546.5 300L546.7 250.9M704.9 300L704.8 255.8M985.9 300L986.2 235.6M976.7 300L976.9 241.6M439.6 300L439.3 255.3M829.4 300L829.8 252.2M534.0 300L533.8 251.1M890.3 300L890.4 245.5M983.4 300L983.5 248.5M818.3 300L818.6 249.9M1086.7 300L1086.8 248.2M1012.9 300L1013.3 249.1M453.8 300L453.4 235.2M973.5 300L973.2 243.8M973.3 300L973.1 248.7M863.1 300L863.1 247.8M878.7 300L878.6 247.4M921.0 300L920.7 254.6M682.5 300L682.3 258.1M683.4 300L683.5 253.8M879.6 300L879.5 235.0M996.6 300L996.8 247.6M627.1 300L627.1 243.8M472.5 300L472.8 247.0M509.7 300L509.9 241.9M509.5 300L509.5 249.6M475.1 300L474.9 258.0M605.9 300L605.7 251.8M548.8 300L548.6 260.8M1033.7 300L1033.6 251.9M463.2 300L463.1 252.7M945.7 300L945.4 254.5M791.6 300L791.6 243.1M920.3 300L920.0 245.9M947.1 300L947.4 261.5M710.7 300L710.7 251.1M441.7 300L441.4 245.0M920.8 300L920.6 254.4M521.5 300L521.3 256.7M914.5 300L914.2 252.0M1106.1 300L1106.0 252.4M729.1 300L728.9 238.4M569.7 300L569.4 254.9M748.0 300L748.2 254.2M1037.0 300L1037.0 259.3M590.1 300L590.3 245.0M576.6 300L576.6 255.7M505.4 300L505.4 261.8M441.5 300L441.3 245.6M541.2 300L541.1 240.9M884.7 300L884.7 245.9M785.2 300L785.1 246.0M693.8 300L694.1 255.7M968.9 300L968.7 257.7M1073.8 300L1073.6 241.5M1093.6 300L1093.4 253.2M446.7 300L446.9 258.8M836.1 300L836.4 253.6M948.1 300L948.2 260.2M995.5 300L995.4 248.8M892.8 300L892.9 246.3M535.2 300L535.4 239.2M945.0 300L944.8 244.1M1070.4 300L1070.5 238.5M776.6 300L776.7 254.2M482.2 300L482.1 266.0M866.5 300L866.2 244.2M999.7 300L999.8 240.5M651.7 300L651.5 247.4M884.6 300L884.5 254.6M564.0 300L564.0 237.8M1085.5 300L1085.9 260.2M782.7 300L782.4 253.8M857.7 300L857.4 257.8M470.1 300L470.1 255.3M573.1 300L573.5 239.6M734.7 300L734.3 254.4M988.5 300L988.6 246.3M890.5 300L890.1 255.2M936.5 300L936.6 265.2M743.3 300L743.0 253.7M806.7 300L806.9 254.5M622.2 300L622.1 251.1M718.3 300L718.4 260.1M729.9 300L729.7 248.8M1037.3 300L1037.0 254.9M469.5 300L469.3 252.1M556.3 300L556.1 257.3M711.0 300L710.7 248.4M678.4 300L678.1 242.2M558.6 300L558.7 244.4M910.2 300L910.2 248.5M987.4 300L987.7 248.3M596.9 300L596.9 256.1M912.4 300L912.4 247.1M642.2 300L642.4 240.1M758.2 300L758.5 251.6M850.7 300L850.7 250.2M952.8 300L952.4 255.5M657.8 300L657.8 250.0M725.7 300L725.3 257.4M514.6 300L514.7 259.3M533.4 300L533.0 254.8M531.9 300L531.9 243.7M848.0 300L847.7 263.0M701.3 300L701.6 259.6M709.1 300L708.8 255.0M880.2 300L880.3 251.5M567.3 300L567.5 259.5M1082.0 300L1081.9 249.6M1035.3 300L1035.4 247.0M1055.4 300L1055.3 262.7M1107.4 300L1107.2 239.3M841.6 300L841.4 248.7M431.5 300L431.1 241.9M922.5 300L922.6 253.0M1011.1 300L1010.8 252.3M472.4 300L472.2 254.7M1064.4 300L1064.1 257.3M612.3 300L612.5 252.4M699.2 300L699.2 251.6M420.8 300L420.8 244.4M966.2 300L966.3 236.0M1072.2 300L1072.4 257.7M508.7 300L508.8 250.6M777.7 300L777.7 249.2M801.4 300L801.2 259.9M950.7 300L950.7 241.5M636.2 300L636.6 244.5M1018.7 300L1018.8 265.5M860.9 300L860.9 241.5M933.8 300L934.1 268.8M923.0 300L922.7 259.6M742.7 300L742.3 246.9M567.7 300L568.0 254.3M608.5 300L608.9 244.1M771.2 300L770.8 251.7M748.5 300L748.1 257.4M422.5 300L422.1 258.4M675.3 300L675.4 242.3M469.5 300L469.2 245.7M745.3 300L745.4 255.6M641.1 300L641.3 256.3M813.7 300L813.3 248.8M1082.2 300L1082.5 247.9M821.8 300L821.6 262.2M868.9 300L868.9 253.9M801.6 300L801.5 242.1M987.1 300L987.0 240.9M512.5 300L512.4 242.8M606.5 300L606.1 265.2M795.5 300L795.5 244.8M896.4 300L896.2 245.9M592.2 300L592.1 246.9M552.5 300L552.2 242.1M757.5 300L757.3 240.5M723.1 300L723.3 250.1M981.0 300L981.4 260.0M962.4 300L962.1 245.8M509.1 300L509.3 246.2M826.9 300L827.0 259.1M649.0 300L648.6 253.7M700.1 300L699.7 245.9M944.0 300L944.3 256.3M701.6 300L701.3 251.3M1069.7 300L1069.4 253.1M749.4 300L749.5 260.7M510.2 300L510.3 242.5M902.8 300L903.1 260.5M1048.9 300L1048.9 246.7M737.8 300L737.7 248.3M811.0 300L810.9 250.6M931.6 300L931.4 245.6M890.8 300L890.9 241.8M1112.6 300L1112.9 243.1M527.5 300L527.2 240.0M1039.2 300L1039.1 245.2M603.7 300L603.5 256.3M733.7 300L733.4 241.6M678.0 300L678.1 249.9M730.4 300L730.8 247.8M719.7 300L719.6 243.6M811.4 300L811.6 248.9M976.9 300L977.2 242.1M611.9 300L611.7 243.4M947.9 300L948.3 260.7M861.4 300L861.6 250.2M492.6 300L492.7 259.6M842.7 300L842.5 251.8M559.3 300L559.2 260.9M595.0 300L594.7 257.5M1108.6 300L1108.9 244.6M618.0 300L618.2 242.2M652.3 300L652.0 235.0M561.1 300L561.1 254.3M589.0 300L588.8 248.3M1043.3 300L1043.5 259.4M861.1 300L861.2 244.0M437.9 300L438.3 256.1M1046.9 300L1047.0 250.6M478.7 300L478.4 259.8M848.6 300L848.5 262.2M987.2 300L987.3 244.7M779.6 300L779.9 245.0M1038.4 300L1038.3 259.6M900.9 300L900.6 264.9M541.7 300L541.6 239.8M1021.3 300L1021.1 252.8M698.7 300L698.4 258.7M635.2 300L635.1 261.6M768.3 300L768.1 242.0M819.4 300L819.4 252.3M564.7 300L565.0 242.9M987.7 300L988.0 243.1M684.0 300L683.7 246.2M539.0 300L539.0 234.4M1062.9 300L1063.0 244.3M1088.2 300L1088.0 249.7M1101.1 300L1101.1 260.6M1037.4 300L1037.2 260.4M559.6 300L559.5 247.7M1023.4 300L1023.2 250.9M507.7 300L508.0 264.9M712.4 300L712.2 246.7M717.2 300L717.3 253.4M696.3 300L696.4 247.2M1048.0 300L1047.8 257.7M1041.0 300L1041.4 249.8M692.8 300L692.6 254.6M886.7 300L886.6 248.0M1085.9 300L1086.0 251.8M530.8 300L530.8 238.8M567.0 300L567.2 244.0M978.4 300L978.1 257.5M514.4 300L514.1 252.4M795.7 300L795.9 243.8M856.6 300L856.6 260.8M951.9 300L952.2 260.1M713.4 300L713.2 258.3M960.9 300L960.7 251.6M918.8 300L919.1 260.4M744.7 300L744.6 246.1M616.6 300L616.3 252.2M1058.4 300L1058.2 253.0M703.4 300L703.6 244.5M1078.3 300L1078.1 240.1M839.5 300L839.6 259.1M452.9 300L453.2 251.7M674.6 300L674.7 243.8M837.6 300L837.8 252.7M476.1 300L476.5 262.8" stroke="#edb120" stroke-width="1.5" fill="none"/>
<path d="M728.3 300L728.1 256.9M449.1 300L449.4 245.6M1008.1 300L1008.2 250.2M1076.2 300L1075.9 236.5M680.4 300L680.1 239.6M665.9 300L665.7 248.0M428.4 300L428.1 238.8M1003.3 300L1003.5 246.8M446.1 300L446.2 251.4M636.9 300L636.5 256.6M842.6 300L842.9 254.3M677.2 300L677.3 258.9M475.2 300L475.2 260.4M998.1 300L997.8 249.4M721.1 300L721.1 247.1M939.3 300L939.7 245.6M1072.2 300L1072.2 238.8M688.2 300L688.2 247.6M441.2 300L441.2 251.6M856.0 300L856.0 262.9M497.3 300L497.4 244.3M1090.4 300L1090.2 259.5M914.7 300L914.4 265.4M442.4 300L442.0 241.3M821.9 300L822.1 261.4M663.9 300L663.5 242.6M1078.2 300L1078.0 249.4M762.2 300L762.3 249.5M955.7 300L955.7 242.9M875.3 300L875.7 247.0M1087.8 300L1087.6 261.2M882.0 300L881.7 240.8M652.2 300L651.9 246.2M901.5 300L901.5 254.1M589.4 300L589.2 246.7M904.6 300L904.6 267.0M1022.0 300L1022.1 245.4M475.5 300L475.4 254.6M849.4 300L849.6 239.4M987.7 300L987.4 251.9M735.7 300L735.7 244.5M879.1 300L879.4 238.7M520.0 300L520.4 253.1M649.3 300L649.3 257.4M515.8 300L516.2 245.4M943.3 300L943.1 249.0M829.1 300L828.9 264.5M421.5 300L421.4 248.1M526.9 300L526.9 245.7M733.4 300L733.6 255.1M770.1 300L770.0 246.1M878.0 300L877.7 240.9M431.3 300L431.4 255.8M1086.7 300L1086.5 243.9M795.6 300L795.9 245.5M620.8 300L620.5 250.0M976.1 300L976.0 259.2M517.2 300L517.0 245.8M427.7 300L427.6 242.7M633.8 300L633.9 259.3M497.9 300L497.8 250.4M501.3 300L501.0 241.1" stroke="#7e2f8e" stroke-width="1.5" fill="none"/>
<path d="M973.3 300L973.3 239.3M744.2 300L744.4 244.1M769.7 300L769.4 249.4M803.7 300L803.7 253.8M851.5 300L851.2 240.7M568.4 300L568.0 255.2M443.3 300L443.2 248.6M590.8 300L590.6 253.2M558.1 300L558.4 247.7M996.2 300L995.8 248.1M526.0 300L526.1 253.0M604.7 300L604.9 252.4M863.7 300L863.7 244.5M934.8 300L934.8 256.3M482.2 300L482.0 241.9M1025.0 300L1024.8 244.6M523.0 300L522.7 245.6M682.6 300L682.9 237.6M862.5 300L862.2 243.1M585.2 300L584.9 258.8M485.8 300L486.0 249.0M879.4 300L879.4 235.0M552.5 300L552.5 253.7M704.5 300L704.4 245.1M585.2 300L584.9 242.3M504.0 300L504.3 246.0M658.1 300L657.8 255.9M1068.2 300L1068.0 238.3M942.6 300L942.8 259.4M982.6 300L982.5 257.0M513.7 300L514.0 244.4M985.9 300L985.7 259.3M970.4 300L970.5 243.8M543.4 300L543.4 246.3M817.5 300L817.5 252.6M727.9 300L728.1 259.0M935.5 300L935.1 258.2M715.4 300L715.5 249.2M705.0 300L705.2 248.9M1080.4 300L1080.0 259.8M593.2 300L593.2 250.0M979.5 300L979.5 256.4M889.3 300L889.2 249.7M1094.7 300L1094.7 239.2M559.7 300L559.8 244.4M631.9 300L632.1 247.3M1087.6 300L1087.9 241.4M742.7 300L742.8 254.6M497.3 300L497.7 239.2M1054.2 300L1054.3 250.4M782.7 300L782.5 240.7M1055.8 300L1055.5 258.3M451.0 300L450.6 241.1M591.5 300L591.3 263.4M445.6 300L445.3 240.9M843.6 300L843.7 245.0M654.2 300L654.4 237.0M639.8 300L639.9 263.5M854.6 300L854.5 257.4M508.4 300L508.4 251.9M952.2 300L952.0 245.0M1032.8 300L1033.1 247.3M817.8 300L817.4 258.3M485.5 300L485.3 249.8M991.9 300L992.0 257.1M977.7 300L977.5 248.6M1040.0 300L1040.3 247.6M530.9 300L530.9 238.8M871.5 300L871.4 259.1M567.9 300L567.6 244.8M875.9 300L875.8 256.9M680.8 300L680.9 242.0M794.0 300L793.8 248.4M648.1 300L647.7 239.7M821.5 300L821.6 249.3M850.0 300L849.8 253.1M485.9 300L486.2 248.5M676.5 300L676.7 244.2M779.6 300L779.7 258.5M506.0 300L506.3 248.3M975.0 300L975.2 241.0M867.1 300L867.0 245.5M1005.2 300L1005.3 252.8M864.8 300L864.6 255.6M728.1 300L727.8 251.3M681.7 300L681.5 240.4M1006.1 300L1005.8 237.1M799.9 300L799.7 259.9M688.2 300L687.9 239.2M992.9 300L993.1 251.9M1059.2 300L1059.0 257.5M482.4 300L482.0 241.4M551.1 300L551.1 245.4M465.6 300L465.3 256.0M919.4 300L919.6 240.3M735.2 300L735.0 244.2M458.0 300L458.1 253.1M504.2 300L503.9 264.1M1017.4 300L1017.4 259.2M755.5 300L755.8 240.8M546.4 300L546.2 247.6M603.5 300L603.6 256.5M563.1 300L563.1 250.3M771.0 300L770.7 249.1M1031.6 300L1031.2 260.8M533.9 300L534.2 244.4M526.5 300L526.3 254.4M429.2 300L429.4 254.6M744.7 300L744.6 258.6M1067.3 300L1067.5 241.2M801.8 300L801.6 248.4M910.8 300L910.8 244.7M980.2 300L980.2 239.7M865.2 300L865.4 252.0M1006.4 300L1006.1 244.3M689.8 300L689.7 253.5M1017.3 300L1017.3 264.0M881.2 300L881.2 241.0M711.3 300L711.0 246.1M1113.8 300L1113.9 240.3M823.2 300L823.3 264.1M681.0 300L681.2 260.2M604.3 300L604.0 257.5M895.6 300L895.6 254.9M1021.6 300L1021.5 256.0M636.3 300L636.2 251.0M994.5 300L994.4 245.1M748.2 300L748.5 245.4M638.8 300L638.4 261.2M462.0 300L462.3 240.8M750.2 300L749.8 257.6M1088.1 300L1087.7 248.8M631.5 300L631.3 251.6M1061.0 300L1060.9 253.5M940.7 300L941.0 261.5M597.4 300L597.7 250.2M517.1 300L517.5 255.3M863.8 300L863.7 264.8M615.7 300L615.3 256.5M546.4 300L546.5 237.2M606.2 300L606.5 248.0M987.0 300L986.7 241.1M1040.4 300L1040.6 243.5M844.4 300L844.0 257.7M1081.4 300L1081.6 257.8M775.5 300L775.5 246.3M892.1 300L892.4 256.7M1012.5 300L1012.8 255.0M566.3 300L566.0 254.5M605.4 300L605.4 262.3M477.2 300L477.0 262.0M841.7 300L841.7 240.4M915.2 300L914.8 247.6M745.1 300L745.0 255.1M1017.0 300L1016.9 245.0M619.0 300L618.6 250.6M631.1 300L631.1 259.0M538.9 300L539.2 256.5M932.7 300L932.3 253.8M1060.6 300L1060.9 256.8M1034.3 300L1034.3 239.2M464.8 300L464.6 234.5M1020.8 300L1021.1 258.2M781.6 300L781.6 239.0M733.9 300L733.8 252.1M691.5 300L691.4 238.8M977.2 300L977.5 253.6M824.1 300L823.8 251.6M797.8 300L797.6 255.2M489.0 300L488.8 243.8M539.4 300L539.0 240.2M1009.5 300L1009.8 254.5M537.7 300L537.7 248.7M937.4 300L937.5 260.3M516.7 300L517.0 251.7M1102.0 300L1102.0 259.1M941.0 300L940.8 244.2M1024.9 300L1024.9 244.8M614.0 300L614.0 257.0M442.1 300L441.9 262.3M634.6 300L634.4 248.6M930.7 300L930.6 255.5M594.7 300L594.9 254.4M1071.3 300L1071.1 246.1M844.2 300L844.6 246.9M984.2 300L984.0 258.2M1074.7 300L1074.5 258.4M1072.9 300L1072.6 238.1M679.3 300L679.3 241.7M945.1 300L945.0 260.3M687.2 300L687.4 244.1M886.1 300L886.5 250.0M624.8 300L624.6 263.8M861.2 300L861.4 258.2M594.9 300L594.7 256.7M474.2 300L474.1 259.1M1079.7 300L1079.4 237.6M781.2 300L781.6 241.7M837.0 300L836.9 257.9M907.4 300L907.5 253.2M721.4 300L721.0 264.2M911.6 300L911.7 251.1M425.1 300L424.9 242.9M1087.2 300L1087.1 252.3M506.3 300L506.4 246.5M799.3 300L799.0 242.5M429.0 300L429.1 243.9M1011.1 300L1011.3 264.1M588.4 300L588.1 259.0M557.4 300L557.4 241.8M1023.2 300L1023.0 256.2M485.7 300L485.4 245.6M821.6 300L821.6 267.9M769.4 300L769.3 248.2M721.5 300L721.6 243.1M505.5 300L505.8 261.5M524.1 300L524.3 248.4M594.3 300L594.2 259.4M624.4 300L624.4 266.8M875.6 300L875.8 237.7M1049.5 300L1049.8 258.0M761.6 300L761.8 236.8M618.5 300L618.5 263.4M919.6 300L919.3 252.2M651.0 300L651.3 259.0M837.9 300L837.7 244.1M456.3 300L456.2 256.2M466.8 300L467.1 241.9M852.2 300L852.0 250.9M486.4 300L486.8 241.2M979.9 300L979.7 240.0M542.4 300L542.0 240.5M1060.5 300L1060.5 260.2M512.1 300L512.3 255.1M561.6 300L561.5 246.0M741.0 300L741.3 250.9M513.7 300L513.7 248.9M627.9 300L628.2 247.4M429.0 300L428.7 236.7M478.6 300L478.5 244.5M747.0 300L746.7 249.6M927.5 300L927.6 264.2M1108.8 300L1108.8 241.7M919.6 300L919.7 242.2M863.7 300L863.5 242.1M1026.2 300L1026.4 247.1M439.4 300L439.8 255.0M764.4 300L764.1 249.0M990.9 300L990.7 242.2M677.5 300L677.8 241.5M501.2 300L501.5 244.2M872.6 300L872.9 256.8M623.1 300L622.8 254.9M619.8 300L619.9 244.8M521.1 300L520.8 260.1M775.9 300L775.8 245.0" stroke="#77ac30" stroke-width="1.5" fill="none"/>
<path d="M422.2 300L422.2 239.4M970.2 300L970.0 244.8M844.8 300L844.8 242.7M743.0 300L742.9 247.1M1031.2 300L1030.9 241.8M725.0 300L724.6 250.2M568.1 300L568.4 240.5M627.6 300L627.2 255.9M865.0 300L865.4 246.6M941.4 300L941.7 266.9M716.5 300L716.9 257.4M783.0 300L783.3 259.8M1026.0 300L1025.6 246.7M855.9 300L855.6 249.4M1081.1 300L1081.0 238.0M1042.5 300L1042.2 260.4M650.0 300L649.7 242.2M453.8 300L454.1 245.8M566.7 300L567.0 250.0M461.6 300L461.8 243.1M926.6 300L926.4 262.4M549.0 300L549.3 259.6M858.3 300L858.6 250.6M1076.1 300L1075.9 237.1M736.9 300L736.6 244.0M942.4 300L942.1 260.3M924.7 300L924.6 248.5M887.7 300L888.0 250.3M551.3 300L551.0 255.6M1112.3 300L1112.2 243.9M546.9 300L546.8 251.8M945.9 300L946.2 253.7M504.4 300L504.1 256.1M541.6 300L541.7 235.8M1111.3 300L1111.1 247.1M768.8 300L768.9 244.4M579.0 300L579.3 253.4M764.7 300L764.9 245.4M638.0 300L638.3 258.6M464.7 300L464.5 241.2M948.2 300L948.0 257.5M1009.9 300L1009.6 239.1M614.7 300L614.5 241.6M907.7 300L907.4 257.1M464.0 300L464.2 244.3M927.2 300L926.8 256.8M556.2 300L556.0 240.7M803.7 300L803.9 242.5M701.2 300L701.4 256.8M807.1 300L807.5 244.0M1034.0 300L1033.9 251.8M953.0 300L952.6 243.2M798.4 300L798.7 245.6M893.8 300L893.6 245.3M862.0 300L862.2 244.2M953.2 300L952.8 247.2M513.0 300L512.6 242.9M530.5 300L530.6 251.0M1061.5 300L1061.6 252.9M836.3 300L836.4 241.5M890.7 300L890.7 241.5M510.5 300L510.6 259.2M546.8 300L546.5 253.8M517.7 300L517.3 255.8M974.9 300L974.8 249.7M896.2 300L896.2 254.4M571.3 300L571.1 236.8M505.4 300L505.2 255.5M447.5 300L447.5 255.7M525.2 300L525.2 242.2M534.0 300L533.8 238.8M493.0 300L493.3 240.3M1052.1 300L1052.4 255.4M649.9 300L649.5 250.2M515.3 300L515.3 246.7M1035.9 300L1035.7 255.9M515.6 300L515.5 256.1M837.8 300L837.4 242.9M914.3 300L914.0 247.8M483.0 300L482.6 243.0M814.2 300L813.9 256.4M461.0 300L461.1 250.5M630.0 300L629.7 264.9M643.4 300L643.7 254.6M442.2 300L442.5 242.1M820.8 300L820.6 247.9M557.9 300L558.1 245.1M839.8 300L840.1 242.4M443.0 300L442.7 242.2M650.5 300L650.5 253.0M889.3 300L889.2 245.5M488.4 300L488.2 242.4M1081.3 300L1081.1 245.0M613.6 300L613.3 257.3M774.3 300L774.5 241.2M793.7 300L793.4 260.2M458.0 300L457.9 247.3M977.5 300L977.8 239.7M662.3 300L662.2 247.5M506.1 300L506.0 259.0M620.0 300L620.3 262.5M438.8 300L438.8 253.4M640.1 300L640.1 261.4M716.6 300L716.4 243.2M1019.7 300L1019.9 257.0M638.6 300L638.5 255.9M1069.6 300L1069.6 255.9M1041.3 300L1041.2 254.4" stroke="#4dbeee" stroke-width="1.5" fill="none"/>
<polygon points="416.5,258.6 418.0,272.4 419.5,263.5 421.0,267.4 422.5,260.5 424.0,271.7 425.5,259.1 427.0,271.0 428.5,260.6 430.0,272.9 431.5,260.1 433.0,270.4 434.5,264.9 436.0,268.0 437.5,264.6 439.0,270.8 440.5,259.5 442.0,272.2 443.5,258.4 445.0,268.7 446.5,262.1 448.0,268.2 449.5,259.6 451.0,272.7 452.5,262.9 454.0,269.6 455.5,262.3 457.0,272.1 458.5,264.8 460.0,271.6 461.5,259.9 463.0,269.3 464.5,258.3 466.0,272.5 467.5,265.7 469.0,269.5 470.5,264.2 472.0,267.0 473.5,265.6 475.0,271.9 476.5,258.0 478.0,269.9 479.5,261.7 481.0,268.6 482.5,265.8 484.0,269.9 485.5,262.6 487.0,270.8 488.5,261.3 490.0,267.4 491.5,263.7 493.0,267.6 494.5,260.3 496.0,272.9 497.5,260.5 499.0,268.1 500.5,258.6 502.0,270.7 503.5,260.1 505.0,271.7 506.5,258.5 508.0,268.4 509.5,263.2 511.0,271.3 512.5,265.8 514.0,270.3 515.5,260.1 517.0,267.8 518.5,260.7 520.0,267.2 521.5,259.9 523.0,269.6 524.5,263.5 526.0,272.8 527.5,265.1 529.0,269.3 530.5,262.2 532.0,270.3 533.5,263.4 535.0,270.6 536.5,264.7 538.0,271.0 539.5,259.4 541.0,270.3 542.5,260.7 544.0,270.4 545.5,261.6 547.0,270.9 548.5,265.4 550.0,270.4 551.5,265.6 553.0,267.8 554.5,258.1 556.0,270.7 557.5,263.5 559.0,269.4 560.5,264.7 562.0,272.5 563.5,263.5 565.0,272.9 566.5,262.7 568.0,272.3 569.5,261.0 571.0,270.3 572.5,264.7 574.0,271.9 575.5,260.8 577.0,267.8 578.5,264.7 580.0,270.2 581.5,265.8 583.0,270.4 584.5,260.9 586.0,271.8 587.5,262.4 589.0,269.0 590.5,265.1 592.0,271.5 593.5,265.6 595.0,270.8 596.5,261.0 598.0,270.0 599.5,261.2 601.0,267.5 602.5,262.2 604.0,269.9 605.5,264.6 607.0,272.2 608.5,265.3 610.0,270.9 611.5,264.9 613.0,268.7 614.5,258.1 616.0,268.5 617.5,260.7 619.0,269.0 620.5,261.1 622.0,272.8 623.5,260.0 625.0,269.5 626.5,265.2 628.0,271.1 629.5,260.9 631.0,270.7 632.5,262.3 634.0,267.8 635.5,261.9 637.0,268.0 638.5,265.0 640.0,270.6 641.5,263.5 643.0,272.1 644.5,260.9 646.0,269.9 647.5,264.4 649.0,272.4 650.5,258.7 652.0,272.2 653.5,265.8 655.0,271.1 656.5,263.1 658.0,270.2 659.5,262.8 661.0,272.0 662.5,264.0 664.0,268.0 665.5,260.3 667.0,267.7 668.5,264.5 670.0,268.8 671.5,259.9 673.0,271.6 674.5,264.2 676.0,269.3 677.5,264.7 679.0,272.6 680.5,264.7 682.0,270.9 683.5,265.0 685.0,268.8 686.5,260.8 688.0,268.1 689.5,262.7 691.0,271.9 692.5,264.5 694.0,269.0 695.5,259.0 697.0,267.7 698.5,263.5 700.0,269.1 701.5,258.5 703.0,270.6 704.5,260.0 706.0,268.0 707.5,259.7 709.0,269.5 710.5,259.4 712.0,272.3 713.5,258.7 715.0,267.6 716.5,261.5 718.0,268.5 719.5,265.0 721.0,269.0 722.5,259.0 724.0,268.3 725.5,263.4 727.0,268.0 728.5,262.6 730.0,268.1 731.5,263.3 733.0,268.0 734.5,258.7 736.0,272.3 737.5,258.3 739.0,269.8 740.5,262.9 742.0,271.7 743.5,258.4 745.0,271.8 746.5,259.3 748.0,271.5 749.5,261.1 751.0,271.4 752.5,260.9 754.0,267.4 755.5,261.0 757.0,267.2 758.5,259.1 760.0,270.5 761.5,264.2 763.0,267.3 764.5,260.3 766.0,269.1 767.5,265.0 769.0,269.0 770.5,261.5 772.0,267.5 773.5,259.3 775.0,267.3 776.5,260.3 778.0,269.0 779.5,258.8 781.0,272.6 782.5,259.9 784.0,272.4 785.5,258.6 787.0,272.0 788.5,264.6 790.0,268.7 791.5,262.2 793.0,267.5 794.5,262.8 796.0,272.6 797.5,265.7 799.0,271.8 800.5,264.6 802.0,267.6 803.5,263.2 805.0,268.0 806.5,262.2 808.0,267.1 809.5,263.0 811.0,268.6 812.5,258.5 814.0,272.8 815.5,260.0 817.0,271.2 818.5,259.9 820.0,271.5 821.5,265.9 823.0,270.2 824.5,260.6 826.0,268.2 827.5,258.2 829.0,268.7 830.5,258.4 832.0,269.8 833.5,265.9 835.0,272.4 836.5,262.4 838.0,268.0 839.5,258.3 841.0,272.5 842.5,259.0 844.0,268.3 845.5,264.5 847.0,272.1 848.5,259.6 850.0,271.4 851.5,259.6 853.0,269.2 854.5,260.5 856.0,270.8 857.5,260.5 859.0,271.8 860.5,265.5 862.0,267.1 863.5,259.4 865.0,268.0 866.5,259.1 868.0,267.4 869.5,258.6 871.0,267.1 872.5,263.8 874.0,272.1 875.5,264.2 877.0,267.0 878.5,259.4 880.0,267.4 881.5,261.5 883.0,270.2 884.5,261.6 886.0,270.8 887.5,265.3 889.0,268.2 890.5,263.9 892.0,272.9 893.5,259.9 895.0,269.6 896.5,261.3 898.0,271.3 899.5,259.8 901.0,268.2 902.5,259.3 904.0,272.8 905.5,265.1 907.0,269.1 908.5,264.9 910.0,268.9 911.5,262.8 913.0,272.9 914.5,260.6 916.0,272.1 917.5,261.5 919.0,272.8 920.5,263.8 922.0,272.0 923.5,260.8 925.0,271.6 926.5,264.1 928.0,267.5 929.5,259.8 931.0,272.3 932.5,260.2 934.0,271.3 935.5,258.1 937.0,267.3 938.5,264.1 940.0,271.0 941.5,263.4 943.0,272.1 944.5,263.1 946.0,270.7 947.5,265.3 949.0,271.5 950.5,264.5 952.0,271.4 953.5,261.0 955.0,270.8 956.5,259.6 958.0,272.5 959.5,265.9 961.0,268.4 962.5,262.9 964.0,270.5 965.5,265.4 967.0,271.8 968.5,264.6 970.0,267.7 971.5,264.9 973.0,271.9 974.5,263.2 976.0,267.4 977.5,258.6 979.0,271.3 980.5,263.9 982.0,267.4 983.5,265.3 985.0,272.6 986.5,259.4 988.0,268.3 989.5,261.3 991.0,271.0 992.5,264.2 994.0,268.6 995.5,265.8 997.0,269.4 998.5,264.9 1000.0,268.7 1001.5,265.5 1003.0,271.6 1004.5,265.4 1006.0,272.8 1007.5,261.6 1009.0,272.7 1010.5,262.4 1012.0,270.8 1013.5,263.6 1015.0,271.6 1016.5,258.1 1018.0,272.2 1019.5,262.8 1021.0,269.2 1022.5,262.0 1024.0,272.5 1025.5,260.4 1027.0,269.7 1028.5,259.3 1030.0,267.8 1031.5,265.5 1033.0,271.0 1034.5,264.2 1036.0,270.8 1037.5,258.5 1039.0,271.5 1040.5,263.6 1042.0,272.1 1043.5,265.6 1045.0,270.0 1046.5,260.1 1048.0,270.0 1049.5,261.0 1051.0,270.1 1052.5,258.2 1054.0,267.4 1055.5,260.1 1057.0,267.5 1058.5,261.0 1060.0,269.2 1061.5,261.5 1063.0,273.0 1064.5,259.3 1066.0,272.0 1067.5,265.2 1069.0,272.0 1070.5,260.5 1072.0,271.6 1073.5,265.0 1075.0,269.8 1076.5,263.6 1078.0,268.5 1079.5,259.9 1081.0,269.5 1082.5,258.6 1084.0,270.1 1085.5,260.6 1087.0,272.0 1088.5,259.8 1090.0,271.0 1091.5,263.4 1093.0,270.5 1094.5,260.7 1096.0,268.4 1097.5,259.0 1099.0,268.4 1100.5,265.2 1102.0,267.4 1103.5,260.8 1105.0,269.5 1106.5,265.6 1108.0,268.7 1109.5,258.5 1111.0,270.5 1112.5,266.0 1114.0,270.5 1115.5,258.9 1117.0,267.8 1118.3,373.7 1116.1,384.3 1113.9,372.3 1111.7,387.7 1109.5,367.3 1107.3,390.3 1105.1,371.8 1102.9,389.7 1100.7,371.3 1098.5,391.6 1096.3,368.2 1094.1,391.5 1091.9,371.1 1089.7,391.8 1087.5,376.9 1085.3,385.2 1083.1,376.3 1080.9,387.0 1078.7,376.9 1076.5,387.7 1074.3,368.6 1072.1,392.6 1069.9,377.9 1067.7,383.7 1065.5,377.4 1063.3,386.5 1061.1,369.3 1058.9,389.7 1056.7,373.8 1054.5,391.1 1052.3,370.0 1050.1,389.7 1047.9,374.5 1045.7,387.9 1043.5,372.4 1041.3,385.4 1039.1,368.6 1036.9,387.0 1034.7,373.3 1032.5,390.2 1030.3,372.1 1028.1,391.5 1025.9,371.3 1023.7,388.1 1021.5,373.1 1019.3,388.3 1017.1,373.3 1014.9,393.0 1012.7,375.1 1010.5,386.8 1008.3,371.0 1006.1,384.5 1003.9,368.0 1001.7,392.8 999.5,370.2 997.3,383.6 995.1,374.8 992.9,390.5 990.7,375.3 988.5,383.2 986.3,366.8 984.1,392.4 981.9,366.6 979.7,387.1 977.5,377.1 975.3,383.3 973.1,367.3 970.9,383.2 968.7,377.8 966.5,385.5 964.3,374.4 962.1,392.2 959.9,376.9 957.7,384.1 955.5,369.3 953.3,387.8 951.1,377.5 948.9,392.1 946.7,366.1 944.5,385.6 942.3,370.8 940.1,391.5 937.9,369.1 935.7,390.4 933.5,368.6 931.3,386.5 929.1,374.1 926.9,388.0 924.7,374.6 922.5,386.7 920.3,372.4 918.1,386.1 915.9,367.3 913.7,385.4 911.5,371.6 909.3,392.1 907.1,366.8 904.9,389.5 902.7,378.0 900.5,385.0 898.3,367.4 896.1,387.6 893.9,374.0 891.7,384.0 889.5,370.2 887.3,384.9 885.1,370.7 882.9,383.0 880.7,374.5 878.5,390.5 876.3,375.6 874.1,384.5 871.9,366.1 869.7,392.1 867.5,366.0 865.3,383.8 863.1,368.8 860.9,384.2 858.7,372.8 856.5,391.5 854.3,377.3 852.1,385.2 849.9,368.5 847.7,385.1 845.5,370.3 843.3,388.4 841.1,374.5 838.9,391.3 836.7,368.3 834.5,389.3 832.3,367.4 830.1,385.7 827.9,376.2 825.7,389.8 823.5,367.1 821.3,388.4 819.1,366.8 816.9,387.1 814.7,377.5 812.5,384.2 810.3,372.0 808.1,385.8 805.9,371.6 803.7,392.6 801.5,372.5 799.3,386.2 797.1,375.2 794.9,387.9 792.7,371.3 790.5,387.6 788.3,368.4 786.1,390.8 783.9,368.2 781.7,388.9 779.5,371.7 777.3,386.2 775.1,376.7 772.9,386.1 770.7,375.5 768.5,384.4 766.3,366.5 764.1,385.8 761.9,372.5 759.7,384.7 757.5,377.3 755.3,392.7 753.1,370.7 750.9,384.7 748.7,369.7 746.5,385.8 744.3,374.5 742.1,391.0 739.9,367.3 737.7,391.2 735.5,366.2 733.3,389.1 731.1,369.0 728.9,391.1 726.7,375.2 724.5,384.9 722.3,377.9 720.1,384.9 717.9,374.6 715.7,389.0 713.5,371.7 711.3,390.5 709.1,367.4 706.9,383.3 704.7,374.1 702.5,383.1 700.3,367.8 698.1,384.0 695.9,372.5 693.7,386.4 691.5,366.2 689.3,383.3 687.1,374.1 684.9,390.3 682.7,377.6 680.5,384.3 678.3,370.0 676.1,391.2 673.9,369.8 671.7,390.3 669.5,377.6 667.3,387.9 665.1,373.3 662.9,390.1 660.7,367.6 658.5,391.8 656.3,370.8 654.1,392.0 651.9,368.8 649.7,390.8 647.5,373.1 645.3,388.8 643.1,375.2 640.9,386.7 638.7,372.8 636.5,383.1 634.3,374.2 632.1,383.4 629.9,373.0 627.7,386.2 625.5,369.0 623.3,385.9 621.1,374.0 618.9,385.1 616.7,375.1 614.5,392.4 612.3,372.2 610.1,388.9 607.9,370.4 605.7,392.4 603.5,366.1 601.3,387.7 599.1,367.0 596.9,386.1 594.7,371.8 592.5,387.0 590.3,370.6 588.1,389.7 585.9,375.2 583.7,389.6 581.5,373.8 579.3,389.5 577.1,369.2 574.9,392.6 572.7,368.5 570.5,386.9 568.3,375.1 566.1,392.0 563.9,376.7 561.7,392.8 559.5,367.0 557.3,391.7 555.1,373.2 552.9,391.5 550.7,368.4 548.5,390.9 546.3,366.3 544.1,385.7 541.9,368.0 539.7,388.2 537.5,368.8 535.3,390.0 533.1,366.1 530.9,389.1 528.7,376.7 526.5,384.0 524.3,370.1 522.1,383.4 519.9,367.5 517.7,384.4 515.5,371.2 513.3,386.3 511.1,375.3 508.9,384.5 506.7,374.7 504.5,390.5 502.3,366.4 500.1,391.0 497.9,377.0 495.7,392.0 493.5,372.4 491.3,389.3 489.1,373.1 486.9,385.1 484.7,377.7 482.5,391.5 480.3,376.9 478.1,390.0 475.9,370.9 473.7,392.4 471.5,373.4 469.3,386.4 467.1,366.3 464.9,391.3 462.7,366.0 460.5,391.8 458.3,367.0 456.1,384.4 453.9,377.2 451.7,388.2 449.5,372.2 447.3,387.3 445.1,376.0 442.9,389.7 440.7,369.4 438.5,391.1 436.3,376.4 434.1,383.7 431.9,374.8 429.7,384.4 427.5,373.4 425.3,385.4 423.1,375.1 420.9,388.4 418.7,374.2 416.5,387.0" fill="#4dbeee"/>
<path d="M417.0 345.9 418.8 407.4 420.6 352.4 422.4 410.9 424.2 349.1 426.0 390.8 427.8 330.7 429.6 351.7 431.4 335.9 433.2 389.7 435.0 357.2 436.8 403.2 438.6 351.8 440.4 422.4 442.2 359.7 444.0 407.4 445.8 346.6 447.6 403.6 449.4 340.3 451.2 422.5 453.0 361.9 454.8 402.4 456.6 338.7 458.4 362.7 460.2 332.4 462.0 416.5 463.8 344.7 465.6 395.1 467.4 348.1 469.2 425.6 471.0 338.4 472.8 340.2 474.6 368.2 476.4 407.2 478.2 339.3 480.0 389.5 481.8 334.9 483.6 392.6 485.4 356.5 487.2 405.5 489.0 335.7 490.8 370.5 492.6 341.2 494.4 403.2 496.2 346.6 498.0 383.2 499.8 341.0 501.6 387.8 503.4 356.2 505.2 397.8 507.0 335.6 508.8 389.6 510.6 355.8 512.4 414.1 514.2 334.6 516.0 351.0 517.8 353.2 519.6 396.2 521.4 369.2 523.2 343.9 525.0 361.5 526.8 359.2 528.6 367.9 530.4 404.5 532.2 351.8 534.0 361.8 535.8 336.3 537.6 353.8 539.4 344.8 541.2 388.2 543.0 361.1 544.8 390.3 546.6 335.3 548.4 397.7 550.2 356.6 552.0 375.5 553.8 342.9 555.6 344.2 557.4 366.7 559.2 363.6 561.0 344.0 562.8 363.3 564.6 342.9 566.4 431.4 568.2 340.9 570.0 354.5 571.8 351.6 573.6 374.1 575.4 368.1 577.2 386.1 579.0 351.6 580.8 405.6 582.6 359.7 584.4 366.0 586.2 350.8 588.0 390.8 589.8 333.3 591.6 367.9 593.4 353.5 595.2 376.0 597.0 353.8 598.8 389.8 600.6 353.8 602.4 423.4 604.2 341.9 606.0 407.1 607.8 340.7 609.6 375.7 611.4 343.2 613.2 390.9 615.0 331.2 616.8 347.2 618.6 336.4 620.4 410.0 622.2 341.5 624.0 380.6 625.8 350.5 627.6 386.6 629.4 366.5 631.2 412.6 633.0 358.0 634.8 382.5 636.6 350.6 638.4 381.7 640.2 358.7 642.0 388.5 643.8 347.8 645.6 399.0 647.4 331.9 649.2 399.5 651.0 357.5 652.8 397.3 654.6 358.2 656.4 385.9 658.2 356.2 660.0 388.2 661.8 364.1 663.6 367.9 665.4 361.3 667.2 395.5 669.0 363.2 670.8 342.1 672.6 331.8 674.4 374.1 676.2 370.0 678.0 402.9 679.8 353.5 681.6 344.3 683.4 353.7 685.2 426.0 687.0 354.5 688.8 390.3 690.6 340.8 692.4 416.3 694.2 342.1 696.0 393.7 697.8 365.1 699.6 354.3 701.4 354.0 703.2 392.4 705.0 368.4 706.8 367.6 708.6 338.3 710.4 366.4 712.2 353.4 714.0 382.5 715.8 354.0 717.6 396.2 719.4 331.5 721.2 353.4 723.0 355.0 724.8 372.4 726.6 345.4 728.4 388.5 730.2 347.2 732.0 358.8 733.8 337.4 735.6 404.9 737.4 353.8 739.2 386.1 741.0 356.9 742.8 400.0 744.6 365.7 746.4 398.7 748.2 363.7 750.0 361.3 751.8 369.2 753.6 371.0 755.4 369.0 757.2 387.3 759.0 358.0 760.8 392.7 762.6 341.2 764.4 423.8 766.2 351.6 768.0 405.2 769.8 333.3 771.6 400.8 773.4 352.6 775.2 360.1 777.0 342.2 778.8 407.5 780.6 351.5 782.4 380.6 784.2 360.0 786.0 390.5 787.8 332.4 789.6 394.9 791.4 365.0 793.2 412.7 795.0 331.5 796.8 383.8 798.6 349.6 800.4 376.0 802.2 338.7 804.0 343.2 805.8 331.6 807.6 425.0 809.4 349.2 811.2 394.5 813.0 340.5 814.8 423.8 816.6 333.2 818.4 355.4 820.2 363.0 822.0 388.8 823.8 339.8 825.6 356.5 827.4 367.5 829.2 389.2 831.0 354.3 832.8 364.7 834.6 344.2 836.4 382.0 838.2 332.4 840.0 379.8 841.8 364.2 843.6 388.0 845.4 334.4 847.2 387.5 849.0 361.1 850.8 358.8 852.6 351.1 854.4 408.9 856.2 348.2 858.0 354.3 859.8 333.2 861.6 358.4 863.4 346.8 865.2 364.6 867.0 330.7 868.8 367.4 870.6 360.5 872.4 362.0 874.2 358.3 876.0 401.0 877.8 335.4 879.6 394.6 881.4 350.4 883.2 367.2 885.0 337.1 886.8 350.1 888.6 358.5 890.4 404.0 892.2 337.6 894.0 341.5 895.8 336.9 897.6 425.0 899.4 341.4 901.2 393.2 903.0 368.9 904.8 395.0 906.6 362.7 908.4 406.4 910.2 346.1 912.0 392.3 913.8 361.8 915.6 396.3 917.4 344.5 919.2 406.8 921.0 337.5 922.8 366.7 924.6 365.9 926.4 407.0 928.2 331.5 930.0 400.3 931.8 361.7 933.6 376.4 935.4 368.4 937.2 342.8 939.0 333.4 940.8 420.9 942.6 364.4 944.4 398.8 946.2 361.2 948.0 398.9 949.8 331.7 951.6 395.4 953.4 347.8 955.2 375.8 957.0 340.4 958.8 394.6 960.6 345.4 962.4 413.7 964.2 345.3 966.0 343.3 967.8 345.8 969.6 387.2 971.4 330.4 973.2 399.5 975.0 340.9 976.8 389.5 978.6 341.6 980.4 391.8 982.2 356.0 984.0 376.3 985.8 357.8 987.6 398.5 989.4 360.0 991.2 362.2 993.0 355.5 994.8 422.0 996.6 365.8 998.4 412.3 1000.2 352.2 1002.0 379.7 1003.8 342.5 1005.6 353.6 1007.4 331.6 1009.2 345.8 1011.0 359.1 1012.8 399.9 1014.6 352.5 1016.4 350.2 1018.2 336.5 1020.0 408.0 1021.8 350.5 1023.6 392.6 1025.4 367.8 1027.2 369.1 1029.0 354.2 1030.8 371.9 1032.6 342.4 1034.4 380.1 1036.2 362.3 1038.0 403.3 1039.8 345.8 1041.6 398.4 1043.4 330.6 1045.2 351.2 1047.0 333.2 1048.8 398.5 1050.6 368.5 1052.4 388.2 1054.2 333.7 1056.0 371.3 1057.8 361.3 1059.6 407.2 1061.4 331.2 1063.2 394.5 1065.0 347.0 1066.8 348.6 1068.6 341.3 1070.4 377.4 1072.2 343.8 1074.0 386.6 1075.8 333.6 1077.6 376.0 1079.4 346.1 1081.2 387.4 1083.0 360.4 1084.8 410.8 1086.6 351.0 1088.4 429.8 1090.2 335.3 1092.0 399.8 1093.8 362.2 1095.6 395.0 1097.4 364.9 1099.2 352.1 1101.0 348.2 1102.8 400.2 1104.6 344.4 1106.4 398.2 1108.2 330.7 1110.0 377.4 1111.8 332.8 1113.6 402.5 1115.4 345.0" stroke="#4dbeee" stroke-width="1" fill="none"/>
<path d="M416.7 354.8 418.5 392.9 420.3 346.8 422.1 390.2 423.9 367.7 425.7 423.7 427.5 343.7 429.3 387.6 431.1 339.5 432.9 389.0 434.7 360.7 436.5 363.3 438.3 362.4 440.1 352.5 441.9 358.8 443.7 352.2 445.5 361.3 447.3 393.9 449.1 337.7 450.9 365.0 452.7 354.2 454.5 405.3 456.3 351.5 458.1 405.3 459.9 366.4 461.7 387.6 463.5 345.9 465.3 413.0 467.1 339.8 468.9 375.4 470.7 342.3 472.5 359.6 474.3 350.5 476.1 424.2 477.9 369.3 479.7 403.2 481.5 357.9 483.3 368.7 485.1 358.8 486.9 400.9 488.7 348.7 490.5 379.6 492.3 345.9 494.1 359.1 495.9 367.3 497.7 382.0 499.5 348.0 501.3 381.7 503.1 335.0 504.9 353.2 506.7 361.2 508.5 422.5 510.3 338.1 512.1 426.9 513.9 345.6 515.7 419.0 517.5 354.5 519.3 358.3 521.1 363.3 522.9 371.5 524.7 330.3 526.5 372.3 528.3 356.1 530.1 377.3 531.9 335.4 533.7 372.6 535.5 355.2 537.3 389.8 539.1 354.2 540.9 401.6 542.7 350.7 544.5 429.0 546.3 347.1 548.1 378.0 549.9 351.6 551.7 422.7 553.5 368.3 555.3 429.5 557.1 344.1 558.9 419.1 560.7 348.9 562.5 386.0 564.3 335.9 566.1 406.4 567.9 345.5 569.7 407.9 571.5 332.1 573.3 390.6 575.1 366.4 576.9 389.0 578.7 343.8 580.5 373.0 582.3 367.5 584.1 384.4 585.9 335.4 587.7 420.1 589.5 356.5 591.3 343.7 593.1 354.1 594.9 382.4 596.7 356.4 598.5 347.2 600.3 361.8 602.1 389.3 603.9 333.0 605.7 395.8 607.5 359.6 609.3 390.1 611.1 331.0 612.9 384.8 614.7 342.1 616.5 405.4 618.3 363.9 620.1 407.1 621.9 352.8 623.7 377.1 625.5 367.2 627.3 393.0 629.1 364.5 630.9 386.5 632.7 346.9 634.5 400.8 636.3 341.3 638.1 390.6 639.9 338.1 641.7 354.6 643.5 331.7 645.3 404.5 647.1 358.7 648.9 360.7 650.7 362.2 652.5 354.8 654.3 331.9 656.1 389.3 657.9 349.7 659.7 404.9 661.5 363.2 663.3 358.0 665.1 355.6 666.9 401.1 668.7 346.7 670.5 389.6 672.3 368.0 674.1 405.7 675.9 346.9 677.7 406.8 679.5 342.5 681.3 359.5 683.1 349.9 684.9 423.3 686.7 343.9 688.5 403.4 690.3 345.7 692.1 376.8 693.9 349.9 695.7 407.9 697.5 333.1 699.3 382.4 701.1 354.1 702.9 403.6 704.7 353.3 706.5 386.5 708.3 358.5 710.1 385.3 711.9 339.7 713.7 370.1 715.5 331.6 717.3 388.9 719.1 358.3 720.9 400.0 722.7 344.8 724.5 373.3 726.3 353.9 728.1 376.3 729.9 340.8 731.7 393.7 733.5 343.9 735.3 428.8 737.1 340.5 738.9 398.6 740.7 349.7 742.5 342.4 744.3 355.9 746.1 350.2 747.9 339.4 749.7 394.1 751.5 342.6 753.3 398.9 755.1 348.5 756.9 372.9 758.7 357.9 760.5 428.7 762.3 344.8 764.1 398.3 765.9 332.5 767.7 340.7 769.5 350.8 771.3 423.8 773.1 348.2 774.9 382.2 776.7 369.9 778.5 406.2 780.3 353.2 782.1 395.0 783.9 331.8 785.7 387.6 787.5 355.8 789.3 393.9 791.1 333.3 792.9 430.6 794.7 344.9 796.5 361.0 798.3 331.4 800.1 369.8 801.9 354.0 803.7 401.3 805.5 336.9 807.3 390.9 809.1 367.8 810.9 395.8 812.7 337.7 814.5 362.6 816.3 368.7 818.1 359.3 819.9 366.6 821.7 346.3 823.5 350.7 825.3 383.2 827.1 348.6 828.9 383.0 830.7 345.6 832.5 395.3 834.3 360.0 836.1 352.8 837.9 337.5 839.7 405.2 841.5 344.2 843.3 386.5 845.1 332.3 846.9 371.5 848.7 347.1 850.5 367.0 852.3 337.7 854.1 402.9 855.9 366.8 857.7 425.7 859.5 348.0 861.3 418.6 863.1 338.9 864.9 389.9 866.7 340.9 868.5 430.5 870.3 337.1 872.1 344.0 873.9 333.6 875.7 383.3 877.5 332.1 879.3 420.8 881.1 358.7 882.9 401.6 884.7 334.2 886.5 346.6 888.3 363.7 890.1 407.0 891.9 368.7 893.7 402.8 895.5 366.6 897.3 405.5 899.1 337.1 900.9 418.5 902.7 361.7 904.5 399.3 906.3 353.9 908.1 373.4 909.9 367.8 911.7 382.1 913.5 341.7 915.3 345.6 917.1 354.2 918.9 403.7 920.7 354.6 922.5 397.7 924.3 337.6 926.1 407.1 927.9 354.0 929.7 401.9 931.5 359.0 933.3 340.9 935.1 362.3 936.9 346.1 938.7 364.2 940.5 359.4 942.3 331.1 944.1 403.1 945.9 360.3 947.7 405.3 949.5 343.0 951.3 357.2 953.1 360.6 954.9 422.2 956.7 336.0 958.5 413.4 960.3 345.0 962.1 416.4 963.9 346.2 965.7 422.2 967.5 357.8 969.3 396.2 971.1 354.6 972.9 393.5 974.7 362.5 976.5 340.7 978.3 330.2 980.1 348.5 981.9 341.4 983.7 344.9 985.5 359.4 987.3 360.1 989.1 339.6 990.9 342.0 992.7 363.7 994.5 420.1 996.3 342.4 998.1 402.0 999.9 356.7 1001.7 396.9 1003.5 332.2 1005.3 430.5 1007.1 366.6 1008.9 391.8 1010.7 334.5 1012.5 385.2 1014.3 346.4 1016.1 386.7 1017.9 345.6 1019.7 378.6 1021.5 342.1 1023.3 365.6 1025.1 351.4 1026.9 360.7 1028.7 351.0 1030.5 384.6 1032.3 361.8 1034.1 362.0 1035.9 368.9 1037.7 383.3 1039.5 362.0 1041.3 362.0 1043.1 358.9 1044.9 359.6 1046.7 337.9 1048.5 366.9 1050.3 338.5 1052.1 407.7 1053.9 330.5 1055.7 419.0 1057.5 333.7 1059.3 357.0 1061.1 361.3 1062.9 384.9 1064.7 332.3 1066.5 391.7 1068.3 340.8 1070.1 385.9 1071.9 345.3 1073.7 401.0 1075.5 336.3 1077.3 429.0 1079.1 343.6 1080.9 347.2 1082.7 340.1 1084.5 406.5 1086.3 346.4 1088.1 391.8 1089.9 337.1 1091.7 419.8 1093.5 331.0 1095.3 391.4 1097.1 366.3 1098.9 403.1 1100.7 359.7 1102.5 397.2 1104.3 360.8 1106.1 351.7 1107.9 340.2 1109.7 343.3 1111.5 367.6 1113.3 385.1 1115.1 363.3" stroke="#4dbeee" stroke-width="1" fill="none"/>
<path d="M417.2 345.2 419.0 405.4 420.8 351.3 422.6 407.1 424.4 336.0 426.2 418.8 428.0 341.3 429.8 352.6 431.6 339.2 433.4 352.9 435.2 368.9 437.0 392.6 438.8 335.1 440.6 423.0 442.4 355.7 444.2 387.2 446.0 363.3 447.8 395.8 449.6 367.7 451.4 375.3 453.2 358.2 455.0 344.1 456.8 337.2 458.6 382.9 460.4 366.8 462.2 360.1 464.0 350.6 465.8 347.0 467.6 351.1 469.4 367.6 471.2 365.7 473.0 393.0 474.8 330.6 476.6 342.4 478.4 358.8 480.2 344.0 482.0 360.4 483.8 346.6 485.6 356.8 487.4 404.8 489.2 337.8 491.0 387.0 492.8 366.5 494.6 359.5 496.4 339.6 498.2 402.3 500.0 343.0 501.8 399.3 503.6 363.4 505.4 389.3 507.2 366.8 509.0 373.0 510.8 340.5 512.6 357.4 514.4 349.2 516.2 369.6 518.0 364.0 519.8 352.2 521.6 351.5 523.4 375.6 525.2 339.1 527.0 382.7 528.8 344.9 530.6 355.3 532.4 355.3 534.2 397.7 536.0 359.0 537.8 399.1 539.6 342.3 541.4 346.1 543.2 337.6 545.0 386.8 546.8 361.2 548.6 363.8 550.4 342.1 552.2 366.3 554.0 339.8 555.8 402.0 557.6 341.5 559.4 349.0 561.2 339.2 563.0 359.5 564.8 335.3 566.6 375.7 568.4 345.4 570.2 405.3 572.0 337.5 573.8 348.4 575.6 355.9 577.4 376.7 579.2 334.1 581.0 385.2 582.8 344.3 584.6 343.4 586.4 367.9 588.2 424.6 590.0 348.3 591.8 388.8 593.6 365.7 595.4 371.2 597.2 339.1 599.0 368.8 600.8 361.4 602.6 386.3 604.4 333.5 606.2 371.0 608.0 368.0 609.8 388.6 611.6 368.5 613.4 370.1 615.2 357.7 617.0 403.7 618.8 338.1 620.6 422.2 622.4 360.3 624.2 418.4 626.0 362.2 627.8 385.0 629.6 356.2 631.4 353.3 633.2 361.1 635.0 350.0 636.8 340.1 638.6 407.9 640.4 361.2 642.2 403.1 644.0 339.0 645.8 370.1 647.6 350.2 649.4 402.2 651.2 345.8 653.0 404.0 654.8 338.5 656.6 389.0 658.4 340.3 660.2 394.8 662.0 365.4 663.8 407.5 665.6 332.5 667.4 391.0 669.2 349.7 671.0 389.4 672.8 349.3 674.6 347.2 676.4 334.4 678.2 393.2 680.0 333.3 681.8 354.7 683.6 347.5 685.4 344.0 687.2 344.3 689.0 428.2 690.8 340.4 692.6 407.0 694.4 340.2 696.2 403.4 698.0 339.2 699.8 376.5 701.6 355.5 703.4 411.0 705.2 369.1 707.0 368.2 708.8 342.3 710.6 385.2 712.4 346.0 714.2 394.7 716.0 357.9 717.8 354.8 719.6 342.3 721.4 361.2 723.2 335.1 725.0 419.7 726.8 356.0 728.6 410.7 730.4 344.2 732.2 402.5 734.0 330.2 735.8 342.6 737.6 343.1 739.4 407.9 741.2 365.2 743.0 378.0 744.8 332.1 746.6 386.4 748.4 365.7 750.2 381.5 752.0 354.6 753.8 398.9 755.6 363.3 757.4 397.8 759.2 352.4 761.0 359.0 762.8 358.4 764.6 341.5 766.4 365.5 768.2 355.4 770.0 336.9 771.8 348.2 773.6 334.4 775.4 383.0 777.2 352.9 779.0 412.6 780.8 349.2 782.6 397.0 784.4 350.8 786.2 365.6 788.0 344.4 789.8 390.8 791.6 369.2 793.4 389.7 795.2 354.2 797.0 394.3 798.8 354.4 800.6 399.3 802.4 331.1 804.2 353.6 806.0 341.1 807.8 354.8 809.6 341.3 811.4 344.0 813.2 369.7 815.0 406.1 816.8 335.5 818.6 389.4 820.4 350.2 822.2 367.1 824.0 359.3 825.8 403.3 827.6 354.9 829.4 392.5 831.2 360.5 833.0 401.3 834.8 344.5 836.6 401.3 838.4 336.5 840.2 359.4 842.0 339.1 843.8 340.9 845.6 352.0 847.4 353.6 849.2 350.8 851.0 405.9 852.8 346.3 854.6 420.9 856.4 366.8 858.2 388.6 860.0 346.0 861.8 395.8 863.6 338.5 865.4 397.4 867.2 354.0 869.0 373.4 870.8 353.3 872.6 386.5 874.4 361.4 876.2 342.5 878.0 352.4 879.8 398.4 881.6 330.3 883.4 400.3 885.2 349.4 887.0 356.3 888.8 337.4 890.6 422.2 892.4 339.4 894.2 394.0 896.0 360.8 897.8 404.2 899.6 368.5 901.4 388.5 903.2 364.9 905.0 373.0 906.8 339.4 908.6 388.5 910.4 347.0 912.2 407.4 914.0 364.4 915.8 411.8 917.6 363.7 919.4 377.4 921.2 332.3 923.0 404.7 924.8 341.1 926.6 394.9 928.4 353.7 930.2 344.4 932.0 337.8 933.8 422.4 935.6 330.8 937.4 391.0 939.2 338.8 941.0 375.6 942.8 351.7 944.6 391.8 946.4 358.6 948.2 395.9 950.0 359.5 951.8 394.5 953.6 352.6 955.4 352.7 957.2 353.9 959.0 406.8 960.8 350.8 962.6 358.0 964.4 361.8 966.2 343.5 968.0 356.0 969.8 407.2 971.6 357.3 973.4 350.4 975.2 366.1 977.0 402.9 978.8 334.7 980.6 347.6 982.4 331.5 984.2 359.9 986.0 351.3 987.8 407.7 989.6 347.9 991.4 385.7 993.2 366.3 995.0 401.8 996.8 342.3 998.6 358.2 1000.4 357.1 1002.2 400.5 1004.0 357.8 1005.8 353.5 1007.6 339.5 1009.4 388.2 1011.2 330.3 1013.0 423.1 1014.8 346.7 1016.6 348.8 1018.4 338.1 1020.2 428.1 1022.0 337.6 1023.8 384.4 1025.6 348.4 1027.4 389.3 1029.2 337.2 1031.0 394.3 1032.8 352.4 1034.6 365.9 1036.4 354.6 1038.2 364.9 1040.0 348.8 1041.8 343.6 1043.6 352.6 1045.4 372.6 1047.2 337.9 1049.0 402.6 1050.8 353.0 1052.6 390.6 1054.4 364.2 1056.2 340.9 1058.0 363.9 1059.8 389.7 1061.6 334.4 1063.4 388.1 1065.2 343.0 1067.0 354.6 1068.8 358.7 1070.6 363.1 1072.4 353.6 1074.2 390.6 1076.0 345.5 1077.8 375.2 1079.6 363.3 1081.4 386.6 1083.2 365.8 1085.0 377.4 1086.8 352.5 1088.6 353.2 1090.4 340.0 1092.2 389.1 1094.0 368.5 1095.8 373.2 1097.6 349.2 1099.4 387.3 1101.2 343.8 1103.0 368.3 1104.8 335.1 1106.6 403.0 1108.4 367.7 1110.2 380.4 1112.0 357.6 1113.8 416.7 1115.6 332.8" stroke="#4dbeee" stroke-width="1" fill="none"/>
<path d="M416.8 367.8 418.6 345.8 420.4 341.9 422.2 388.6 424.0 340.3 425.8 406.7 427.6 350.9 429.4 389.5 431.2 334.6 433.0 402.9 434.8 335.7 436.6 386.7 438.4 337.1 440.2 377.9 442.0 363.2 443.8 406.2 445.6 350.1 447.4 404.7 449.2 361.5 451.0 367.3 452.8 363.3 454.6 412.1 456.4 342.1 458.2 352.8 460.0 337.0 461.8 404.3 463.6 332.4 465.4 390.4 467.2 359.4 469.0 431.3 470.8 351.5 472.6 375.2 474.4 364.1 476.2 420.5 478.0 356.2 479.8 370.2 481.6 336.8 483.4 395.2 485.2 349.4 487.0 360.7 488.8 346.2 490.6 352.3 492.4 334.8 494.2 343.4 496.0 335.7 497.8 406.8 499.6 358.2 501.4 407.2 503.2 356.5 505.0 405.7 506.8 346.8 508.6 360.9 510.4 335.0 512.2 370.4 514.0 340.3 515.8 420.6 517.6 347.6 519.4 378.3 521.2 359.6 523.0 391.1 524.8 346.6 526.6 388.1 528.4 360.2 530.2 363.1 532.0 344.6 533.8 374.8 535.6 354.1 537.4 410.5 539.2 359.9 541.0 386.0 542.8 346.8 544.6 399.6 546.4 348.8 548.2 404.3 550.0 332.2 551.8 387.3 553.6 334.5 555.4 421.3 557.2 357.2 559.0 406.0 560.8 333.9 562.6 395.0 564.4 337.5 566.2 426.0 568.0 349.4 569.8 378.5 571.6 367.1 573.4 379.6 575.2 369.9 577.0 421.3 578.8 361.0 580.6 388.5 582.4 344.5 584.2 415.9 586.0 337.1 587.8 404.3 589.6 346.3 591.4 394.7 593.2 332.5 595.0 396.4 596.8 341.4 598.6 399.2 600.4 358.3 602.2 405.0 604.0 354.8 605.8 341.0 607.6 367.2 609.4 387.2 611.2 342.5 613.0 368.9 614.8 346.7 616.6 386.6 618.4 359.4 620.2 363.7 622.0 340.1 623.8 380.3 625.6 339.6 627.4 389.9 629.2 369.1 631.0 354.5 632.8 343.9 634.6 406.0 636.4 365.0 638.2 403.7 640.0 346.1 641.8 411.9 643.6 366.0 645.4 343.8 647.2 363.2 649.0 407.7 650.8 341.7 652.6 347.2 654.4 332.0 656.2 351.1 658.0 356.6 659.8 347.8 661.6 343.6 663.4 381.0 665.2 343.2 667.0 375.7 668.8 358.6 670.6 346.2 672.4 346.5 674.2 402.1 676.0 341.1 677.8 387.6 679.6 364.4 681.4 356.5 683.2 361.8 685.0 377.5 686.8 362.3 688.6 387.7 690.4 343.1 692.2 398.1 694.0 369.1 695.8 397.3 697.6 350.4 699.4 364.2 701.2 342.6 703.0 396.6 704.8 335.6 706.6 401.0 708.4 362.4 710.2 387.3 712.0 358.2 713.8 388.8 715.6 367.5 717.4 393.6 719.2 333.7 721.0 372.2 722.8 332.2 724.6 403.7 726.4 365.6 728.2 403.2 730.0 340.1 731.8 371.1 733.6 343.3 735.4 353.6 737.2 335.1 739.0 407.0 740.8 350.1 742.6 398.7 744.4 338.3 746.2 382.3 748.0 332.4 749.8 380.1 751.6 368.2 753.4 431.4 755.2 335.5 757.0 388.8 758.8 344.7 760.6 429.4 762.4 338.0 764.2 406.6 766.0 363.0 767.8 407.0 769.6 361.3 771.4 414.3 773.2 366.8 775.0 389.0 776.8 349.0 778.6 340.3 780.4 361.5 782.2 377.9 784.0 362.4 785.8 399.3 787.6 363.6 789.4 418.2 791.2 336.3 793.0 344.3 794.8 349.6 796.6 411.8 798.4 356.2 800.2 379.2 802.0 342.2 803.8 359.0 805.6 361.4 807.4 418.0 809.2 355.4 811.0 386.9 812.8 362.1 814.6 386.5 816.4 359.8 818.2 368.4 820.0 347.4 821.8 393.0 823.6 334.7 825.4 383.5 827.2 339.7 829.0 360.5 830.8 349.8 832.6 350.9 834.4 368.1 836.2 350.1 838.0 338.3 839.8 392.1 841.6 362.7 843.4 392.7 845.2 340.3 847.0 386.0 848.8 353.5 850.6 352.6 852.4 366.0 854.2 415.2 856.0 347.9 857.8 402.8 859.6 338.8 861.4 362.4 863.2 342.4 865.0 403.4 866.8 359.8 868.6 343.1 870.4 356.8 872.2 386.8 874.0 355.1 875.8 361.8 877.6 338.5 879.4 346.4 881.2 360.2 883.0 399.3 884.8 363.5 886.6 380.0 888.4 348.5 890.2 400.0 892.0 341.0 893.8 394.1 895.6 354.3 897.4 401.7 899.2 361.5 901.0 404.5 902.8 348.2 904.6 370.0 906.4 352.4 908.2 355.0 910.0 359.9 911.8 390.1 913.6 366.7 915.4 409.2 917.2 333.2 919.0 389.1 920.8 357.6 922.6 407.6 924.4 332.5 926.2 425.1 928.0 340.8 929.8 402.9 931.6 357.2 933.4 385.9 935.2 337.0 937.0 363.2 938.8 356.6 940.6 374.8 942.4 361.3 944.2 394.4 946.0 357.3 947.8 367.0 949.6 362.9 951.4 359.9 953.2 354.4 955.0 394.1 956.8 350.1 958.6 401.7 960.4 369.5 962.2 344.0 964.0 343.6 965.8 361.2 967.6 336.9 969.4 348.8 971.2 349.8 973.0 351.9 974.8 353.5 976.6 397.0 978.4 344.5 980.2 394.6 982.0 368.1 983.8 370.7 985.6 343.3 987.4 386.7 989.2 337.5 991.0 389.3 992.8 351.4 994.6 347.7 996.4 338.9 998.2 403.4 1000.0 355.1 1001.8 391.8 1003.6 341.7 1005.4 377.4 1007.2 344.7 1009.0 348.3 1010.8 357.5 1012.6 356.5 1014.4 357.2 1016.2 384.2 1018.0 331.9 1019.8 402.0 1021.6 352.6 1023.4 364.7 1025.2 352.7 1027.0 376.7 1028.8 344.4 1030.6 385.4 1032.4 344.8 1034.2 346.5 1036.0 354.2 1037.8 392.2 1039.6 361.3 1041.4 419.0 1043.2 361.2 1045.0 387.2 1046.8 363.8 1048.6 353.8 1050.4 351.3 1052.2 376.7 1054.0 340.3 1055.8 345.8 1057.6 359.3 1059.4 405.7 1061.2 336.6 1063.0 389.4 1064.8 330.8 1066.6 370.8 1068.4 335.6 1070.2 384.9 1072.0 332.1 1073.8 372.1 1075.6 346.9 1077.4 396.3 1079.2 345.8 1081.0 352.9 1082.8 368.6 1084.6 383.0 1086.4 364.1 1088.2 368.1 1090.0 363.1 1091.8 401.3 1093.6 359.4 1095.4 399.4 1097.2 337.3 1099.0 363.5 1100.8 336.2 1102.6 387.4 1104.4 362.8 1106.2 370.3 1108.0 360.5 1109.8 350.0 1111.6 331.9 1113.4 407.7 1115.2 346.6" stroke="#4dbeee" stroke-width="1" fill="none"/>
<path d="M441.5 380V489" stroke="#edb120" stroke-width="1.4"/>
<path d="M440.4 360L440.8 481H442.2L442.6 360Z" fill="#77ac30"/>
<path d="M477.9 380V521" stroke="#edb120" stroke-width="1.4"/>
<path d="M476.8 360L477.2 484H478.6L479.0 360Z" fill="#77ac30"/>
<path d="M514.3 380V534" stroke="#edb120" stroke-width="1.4"/>
<path d="M513.2 360L513.6 483H515.0L515.4 360Z" fill="#77ac30"/>
<path d="M550.7 380V499" stroke="#edb120" stroke-width="1.4"/>
<path d="M549.6 360L550.0 483H551.4L551.8 360Z" fill="#77ac30"/>
<path d="M587.1 380V517" stroke="#edb120" stroke-width="1.4"/>
<path d="M586.0 360L586.4 477H587.8L588.2 360Z" fill="#77ac30"/>
<path d="M623.5 380V524" stroke="#edb120" stroke-width="1.4"/>
<path d="M622.4 360L622.8 471H624.2L624.6 360Z" fill="#77ac30"/>
<path d="M659.9 380V510.5" stroke="#edb120" stroke-width="1.4"/>
<path d="M658.8 360L659.2 472H660.6L661.0 360Z" fill="#77ac30"/>
<path d="M696.3 380V516" stroke="#edb120" stroke-width="1.4"/>
<path d="M695.2 360L695.6 466.5H697.0L697.4 360Z" fill="#77ac30"/>
<path d="M732.7 380V492" stroke="#edb120" stroke-width="1.4"/>
<path d="M731.6 360L732.0 480H733.4L733.8 360Z" fill="#77ac30"/>
<path d="M769.1 380V519" stroke="#edb120" stroke-width="1.4"/>
<path d="M768.0 360L768.4 465H769.8L770.2 360Z" fill="#77ac30"/>
<path d="M805.5 380V519.6" stroke="#edb120" stroke-width="1.4"/>
<path d="M804.4 360L804.8 466H806.2L806.6 360Z" fill="#77ac30"/>
<path d="M841.9 380V513" stroke="#edb120" stroke-width="1.4"/>
<path d="M840.8 360L841.2 442H842.6L843.0 360Z" fill="#77ac30"/>
<path d="M878.3 380V511" stroke="#edb120" stroke-width="1.4"/>
<path d="M877.2 360L877.6 480.6H879.0L879.4 360Z" fill="#77ac30"/>
<path d="M914.7 380V509.6" stroke="#edb120" stroke-width="1.4"/>
<path d="M913.6 360L914.0 466H915.4L915.8 360Z" fill="#77ac30"/>
<path d="M951.1 380V494" stroke="#edb120" stroke-width="1.4"/>
<path d="M950.0 360L950.4 476H951.8L952.2 360Z" fill="#77ac30"/>
<path d="M987.5 380V535" stroke="#edb120" stroke-width="1.4"/>
<path d="M986.4 360L986.8 455H988.2L988.6 360Z" fill="#77ac30"/>
<path d="M1023.9 380V510" stroke="#edb120" stroke-width="1.4"/>
<path d="M1022.8 360L1023.2 483.6H1024.6L1025.0 360Z" fill="#77ac30"/>
<path d="M1060.3 380V513" stroke="#edb120" stroke-width="1.4"/>
<path d="M1059.2 360L1059.6 460H1061.0L1061.4 360Z" fill="#77ac30"/>
<path d="M1096.7 380V513" stroke="#edb120" stroke-width="1.4"/>
<path d="M1095.6 360L1096.0 485H1097.4L1097.8 360Z" fill="#77ac30"/>
<polygon points="416.5,250.6 417.9,267.1 419.3,253.7 420.7,267.0 422.1,256.6 423.5,264.0 424.9,261.1 426.3,265.1 427.7,252.4 429.1,267.8 430.5,246.4 431.9,267.6 433.3,246.9 434.7,269.4 436.1,261.7 437.5,265.0 438.9,246.8 440.3,265.0 441.7,262.3 443.1,268.2 444.5,252.3 445.9,263.0 447.3,260.4 448.7,262.1 450.1,248.0 451.5,267.6 452.9,252.5 454.3,262.4 455.7,248.7 457.1,267.8 458.5,261.2 459.9,271.0 461.3,249.2 462.7,269.4 464.1,248.4 465.5,262.5 466.9,259.3 468.3,265.3 469.7,256.0 471.1,263.1 472.5,250.8 473.9,270.8 475.3,251.7 476.7,263.4 478.1,251.5 479.5,264.0 480.9,253.1 482.3,265.9 483.7,250.4 485.1,270.1 486.5,246.7 487.9,262.8 489.3,249.7 490.7,262.4 492.1,249.0 493.5,266.4 494.9,262.9 496.3,267.6 497.7,248.5 499.1,265.4 500.5,255.0 501.9,268.4 503.3,246.5 504.7,264.6 506.1,246.3 507.5,264.1 508.9,253.8 510.3,264.9 511.7,250.4 513.1,268.6 514.5,260.0 515.9,264.7 517.3,249.7 518.7,268.7 520.1,260.0 521.5,264.5 522.9,258.7 524.3,266.3 525.7,251.4 527.1,263.3 528.5,253.6 529.9,268.5 531.3,262.9 532.7,263.6 534.1,259.3 535.5,264.6 536.9,261.5 538.3,270.3 539.7,261.7 541.1,268.3 542.5,260.9 543.9,269.0 545.3,247.8 546.7,269.6 548.1,262.6 549.5,263.1 550.9,255.1 552.3,268.6 553.7,253.4 555.1,268.1 556.5,251.2 557.9,266.7 559.3,250.5 560.7,267.8 562.1,258.7 563.5,267.0 564.9,249.7 566.3,271.6 567.7,252.5 569.1,271.9 570.5,253.2 571.9,265.9 573.3,255.8 574.7,264.2 576.1,260.9 577.5,266.9 578.9,260.1 580.3,263.8 581.7,252.8 583.1,267.5 584.5,248.9 585.9,271.6 587.3,257.8 588.7,270.4 590.1,248.8 591.5,262.1 592.9,247.3 594.3,271.8 595.7,260.7 597.1,268.7 598.5,257.5 599.9,271.6 601.3,257.3 602.7,263.4 604.1,254.7 605.5,267.7 606.9,253.0 608.3,271.4 609.7,262.4 611.1,267.6 612.5,250.2 613.9,263.3 615.3,253.3 616.7,266.3 618.1,260.8 619.5,266.3 620.9,252.7 622.3,263.2 623.7,251.1 625.1,268.8 626.5,258.2 627.9,266.1 629.3,263.0 630.7,267.1 632.1,261.2 633.5,266.8 634.9,246.4 636.3,266.6 637.7,260.2 639.1,266.2 640.5,256.4 641.9,269.2 643.3,251.9 644.7,262.3 646.1,250.8 647.5,265.5 648.9,257.5 650.3,267.2 651.7,261.6 653.1,262.4 654.5,248.6 655.9,268.8 657.3,249.1 658.7,266.0 660.1,250.3 661.5,269.0 662.9,253.4 664.3,271.3 665.7,260.7 667.1,266.6 668.5,251.3 669.9,262.3 671.3,251.1 672.7,266.9 674.1,257.3 675.5,269.0 676.9,256.1 678.3,266.8 679.7,258.7 681.1,271.7 682.5,249.2 683.9,266.5 685.3,246.4 686.7,268.5 688.1,248.7 689.5,265.8 690.9,257.4 692.3,263.2 693.7,255.9 695.1,262.4 696.5,254.7 697.9,263.8 699.3,247.9 700.7,266.3 702.1,247.5 703.5,271.9 704.9,259.3 706.3,268.9 707.7,248.4 709.1,269.3 710.5,248.6 711.9,269.3 713.3,259.2 714.7,264.0 716.1,261.5 717.5,270.3 718.9,250.7 720.3,270.8 721.7,247.7 723.1,271.4 724.5,254.3 725.9,267.7 727.3,261.7 728.7,262.9 730.1,261.5 731.5,270.0 732.9,257.1 734.3,265.4 735.7,259.2 737.1,271.6 738.5,260.5 739.9,270.8 741.3,250.5 742.7,267.5 744.1,256.8 745.5,270.6 746.9,259.7 748.3,263.0 749.7,261.9 751.1,269.6 752.5,246.7 753.9,265.4 755.3,260.6 756.7,263.5 758.1,258.6 759.5,270.8 760.9,254.8 762.3,264.4 763.7,258.5 765.1,264.1 766.5,249.1 767.9,266.2 769.3,262.9 770.7,262.2 772.1,248.4 773.5,266.0 774.9,259.0 776.3,268.2 777.7,258.2 779.1,264.2 780.5,250.9 781.9,262.7 783.3,260.6 784.7,264.5 786.1,254.7 787.5,263.2 788.9,256.7 790.3,271.5 791.7,246.2 793.1,264.7 794.5,254.7 795.9,267.8 797.3,251.0 798.7,267.9 800.1,259.9 801.5,263.5 802.9,249.7 804.3,271.6 805.7,259.9 807.1,262.3 808.5,248.2 809.9,268.5 811.3,257.7 812.7,271.8 814.1,246.2 815.5,266.8 816.9,262.4 818.3,270.5 819.7,250.4 821.1,262.4 822.5,254.1 823.9,267.0 825.3,248.6 826.7,267.1 828.1,249.1 829.5,267.1 830.9,249.9 832.3,262.2 833.7,252.0 835.1,262.4 836.5,258.9 837.9,263.5 839.3,248.4 840.7,270.1 842.1,255.4 843.5,270.8 844.9,252.4 846.3,267.3 847.7,256.4 849.1,262.7 850.5,261.0 851.9,270.8 853.3,250.6 854.7,266.3 856.1,246.7 857.5,271.7 858.9,250.4 860.3,264.5 861.7,249.8 863.1,269.6 864.5,255.0 865.9,271.4 867.3,253.3 868.7,265.9 870.1,255.1 871.5,267.6 872.9,251.5 874.3,265.4 875.7,256.8 877.1,270.9 878.5,258.3 879.9,265.4 881.3,261.6 882.7,270.3 884.1,255.8 885.5,264.2 886.9,253.7 888.3,262.8 889.7,251.7 891.1,264.9 892.5,257.5 893.9,267.3 895.3,259.4 896.7,271.1 898.1,252.5 899.5,270.4 900.9,262.3 902.3,267.4 903.7,254.8 905.1,262.8 906.5,246.5 907.9,265.3 909.3,253.1 910.7,262.1 912.1,248.3 913.5,266.8 914.9,255.7 916.3,268.4 917.7,256.1 919.1,269.1 920.5,261.7 921.9,266.4 923.3,253.6 924.7,264.0 926.1,253.8 927.5,264.5 928.9,254.6 930.3,268.3 931.7,257.5 933.1,262.5 934.5,246.5 935.9,262.3 937.3,258.7 938.7,266.1 940.1,259.3 941.5,266.0 942.9,258.9 944.3,271.9 945.7,250.7 947.1,264.1 948.5,262.0 949.9,264.1 951.3,261.3 952.7,267.7 954.1,261.8 955.5,263.9 956.9,259.6 958.3,265.8 959.7,255.6 961.1,269.1 962.5,249.5 963.9,266.1 965.3,252.6 966.7,264.2 968.1,262.6 969.5,265.8 970.9,247.1 972.3,271.4 973.7,253.3 975.1,270.0 976.5,259.6 977.9,265.7 979.3,246.0 980.7,264.7 982.1,248.5 983.5,264.8 984.9,248.3 986.3,266.4 987.7,254.6 989.1,265.9 990.5,252.0 991.9,269.5 993.3,259.4 994.7,264.1 996.1,248.7 997.5,268.3 998.9,250.2 1000.3,265.1 1001.7,252.5 1003.1,268.8 1004.5,256.7 1005.9,268.4 1007.3,261.5 1008.7,270.8 1010.1,254.4 1011.5,270.7 1012.9,249.6 1014.3,262.0 1015.7,261.4 1017.1,271.1 1018.5,258.6 1019.9,269.5 1021.3,257.9 1022.7,271.2 1024.1,252.5 1025.5,266.9 1026.9,260.7 1028.3,265.0 1029.7,247.1 1031.1,263.0 1032.5,250.8 1033.9,267.3 1035.3,248.5 1036.7,265.7 1038.1,260.6 1039.5,264.3 1040.9,254.4 1042.3,262.6 1043.7,247.5 1045.1,264.2 1046.5,262.5 1047.9,266.3 1049.3,257.8 1050.7,267.4 1052.1,258.1 1053.5,268.2 1054.9,252.0 1056.3,267.7 1057.7,249.9 1059.1,267.9 1060.5,254.4 1061.9,267.0 1063.3,251.3 1064.7,264.1 1066.1,261.4 1067.5,269.7 1068.9,252.5 1070.3,269.6 1071.7,254.5 1073.1,268.3 1074.5,251.3 1075.9,262.8 1077.3,260.2 1078.7,269.4 1080.1,260.9 1081.5,264.6 1082.9,254.8 1084.3,267.9 1085.7,258.3 1087.1,267.3 1088.5,246.6 1089.9,269.9 1091.3,253.7 1092.7,271.7 1094.1,261.4 1095.5,271.0 1096.9,252.5 1098.3,272.0 1099.7,252.5 1101.1,271.5 1102.5,261.8 1103.9,263.3 1105.3,254.1 1106.7,267.6 1108.1,256.7 1109.5,267.3 1110.9,255.0 1112.3,270.6 1113.7,251.7 1115.1,270.2 1116.5,255.6 1117.9,267.2 1117.3,367.6 1115.7,345.4 1114.1,365.5 1112.5,343.8 1110.9,365.5 1109.3,340.9 1107.7,363.3 1106.1,345.1 1104.5,386.3 1102.9,346.7 1101.3,358.5 1099.7,343.3 1098.1,368.3 1096.5,335.0 1094.9,366.5 1093.3,336.4 1091.7,354.9 1090.1,335.0 1088.5,361.7 1086.9,339.2 1085.3,357.6 1083.7,336.4 1082.1,356.3 1080.5,342.4 1078.9,363.6 1077.3,335.4 1075.7,363.9 1074.1,341.1 1072.5,352.7 1070.9,347.5 1069.3,351.6 1067.7,345.8 1066.1,355.0 1064.5,337.3 1062.9,355.3 1061.3,345.4 1059.7,352.4 1058.1,338.0 1056.5,357.2 1054.9,347.9 1053.3,359.8 1051.7,336.2 1050.1,359.7 1048.5,343.6 1046.9,363.8 1045.3,339.6 1043.7,369.6 1042.1,347.5 1040.5,364.0 1038.9,337.4 1037.3,362.9 1035.7,341.7 1034.1,357.5 1032.5,336.4 1030.9,352.4 1029.3,341.5 1027.7,362.0 1026.1,346.0 1024.5,387.2 1022.9,345.2 1021.3,374.2 1019.7,345.6 1018.1,352.7 1016.5,344.4 1014.9,362.3 1013.3,335.5 1011.7,356.5 1010.1,342.7 1008.5,352.4 1006.9,337.7 1005.3,377.2 1003.7,336.6 1002.1,358.2 1000.5,335.8 998.9,351.0 997.3,346.8 995.7,353.6 994.1,345.3 992.5,356.1 990.9,335.4 989.3,354.6 987.7,342.5 986.1,358.6 984.5,335.1 982.9,352.8 981.3,341.1 979.7,357.3 978.1,336.3 976.5,360.8 974.9,346.7 973.3,358.3 971.7,338.4 970.1,362.9 968.5,336.3 966.9,363.2 965.3,340.1 963.7,363.6 962.1,339.1 960.5,360.2 958.9,334.8 957.3,380.4 955.7,346.8 954.1,382.0 952.5,347.4 950.9,357.6 949.3,338.8 947.7,364.3 946.1,341.2 944.5,361.4 942.9,343.8 941.3,358.0 939.7,335.1 938.1,355.5 936.5,343.1 934.9,363.0 933.3,341.9 931.7,354.4 930.1,334.9 928.5,374.0 926.9,344.1 925.3,355.2 923.7,340.0 922.1,354.4 920.5,347.2 918.9,357.7 917.3,347.2 915.7,366.8 914.1,337.7 912.5,358.4 910.9,346.3 909.3,352.9 907.7,341.2 906.1,360.7 904.5,339.4 902.9,369.4 901.3,345.3 899.7,350.3 898.1,338.2 896.5,368.9 894.9,335.4 893.3,358.7 891.7,338.9 890.1,350.8 888.5,340.6 886.9,353.0 885.3,346.8 883.7,362.2 882.1,346.5 880.5,362.5 878.9,342.7 877.3,359.6 875.7,335.6 874.1,350.7 872.5,337.2 870.9,358.4 869.3,339.4 867.7,355.4 866.1,336.3 864.5,357.7 862.9,341.4 861.3,363.8 859.7,345.6 858.1,353.5 856.5,346.0 854.9,367.0 853.3,345.4 851.7,366.5 850.1,345.7 848.5,379.5 846.9,335.8 845.3,352.2 843.7,346.0 842.1,375.9 840.5,343.0 838.9,367.5 837.3,344.7 835.7,356.9 834.1,335.8 832.5,384.4 830.9,334.1 829.3,355.7 827.7,345.5 826.1,363.8 824.5,345.7 822.9,362.2 821.3,341.6 819.7,362.3 818.1,337.7 816.5,360.1 814.9,341.9 813.3,360.4 811.7,344.7 810.1,377.2 808.5,336.9 806.9,352.3 805.3,344.2 803.7,367.6 802.1,334.5 800.5,354.9 798.9,342.5 797.3,355.7 795.7,341.6 794.1,352.1 792.5,344.4 790.9,363.8 789.3,337.7 787.7,353.8 786.1,343.1 784.5,365.1 782.9,342.3 781.3,352.7 779.7,345.8 778.1,357.7 776.5,334.7 774.9,359.6 773.3,335.5 771.7,372.3 770.1,342.7 768.5,358.4 766.9,345.9 765.3,368.6 763.7,337.4 762.1,360.3 760.5,342.1 758.9,356.9 757.3,339.9 755.7,353.2 754.1,338.7 752.5,360.8 750.9,335.4 749.3,356.1 747.7,339.0 746.1,362.9 744.5,341.2 742.9,355.9 741.3,343.6 739.7,359.1 738.1,335.3 736.5,368.9 734.9,346.9 733.3,374.9 731.7,338.2 730.1,357.0 728.5,337.6 726.9,369.1 725.3,345.2 723.7,354.4 722.1,338.9 720.5,361.2 718.9,335.4 717.3,362.9 715.7,338.6 714.1,380.6 712.5,340.6 710.9,363.7 709.3,334.3 707.7,361.8 706.1,337.7 704.5,358.8 702.9,334.7 701.3,354.8 699.7,345.3 698.1,353.8 696.5,344.3 694.9,350.2 693.3,339.9 691.7,362.2 690.1,347.1 688.5,386.6 686.9,342.4 685.3,370.5 683.7,340.0 682.1,364.3 680.5,335.3 678.9,355.6 677.3,334.8 675.7,361.7 674.1,342.3 672.5,358.8 670.9,339.7 669.3,359.2 667.7,334.8 666.1,379.0 664.5,336.6 662.9,352.0 661.3,336.2 659.7,367.9 658.1,335.4 656.5,358.4 654.9,347.3 653.3,387.9 651.7,345.4 650.1,361.4 648.5,338.9 646.9,372.9 645.3,340.8 643.7,360.4 642.1,341.6 640.5,361.8 638.9,343.6 637.3,351.0 635.7,344.1 634.1,370.0 632.5,335.6 630.9,363.5 629.3,340.9 627.7,355.8 626.1,347.9 624.5,375.4 622.9,346.2 621.3,356.9 619.7,339.8 618.1,358.2 616.5,339.5 614.9,369.8 613.3,340.0 611.7,356.3 610.1,338.4 608.5,383.2 606.9,344.5 605.3,362.4 603.7,338.7 602.1,359.2 600.5,347.6 598.9,351.1 597.3,338.2 595.7,352.3 594.1,339.4 592.5,362.5 590.9,338.3 589.3,361.7 587.7,340.2 586.1,360.6 584.5,343.3 582.9,354.0 581.3,346.7 579.7,389.6 578.1,342.3 576.5,384.8 574.9,342.5 573.3,363.8 571.7,339.0 570.1,350.5 568.5,339.0 566.9,360.9 565.3,335.5 563.7,357.0 562.1,342.0 560.5,351.6 558.9,344.7 557.3,371.0 555.7,344.1 554.1,351.5 552.5,334.6 550.9,379.5 549.3,334.9 547.7,365.5 546.1,338.7 544.5,352.9 542.9,338.2 541.3,362.2 539.7,341.4 538.1,374.0 536.5,336.5 534.9,362.9 533.3,339.8 531.7,352.8 530.1,340.1 528.5,359.2 526.9,339.1 525.3,350.2 523.7,341.7 522.1,368.3 520.5,338.1 518.9,365.3 517.3,336.8 515.7,360.6 514.1,342.7 512.5,354.0 510.9,343.4 509.3,381.6 507.7,336.8 506.1,366.1 504.5,339.9 502.9,375.4 501.3,345.4 499.7,360.2 498.1,339.1 496.5,363.4 494.9,347.1 493.3,358.2 491.7,343.9 490.1,352.9 488.5,336.2 486.9,361.6 485.3,336.4 483.7,360.8 482.1,343.3 480.5,375.8 478.9,334.6 477.3,364.3 475.7,335.0 474.1,358.5 472.5,342.6 470.9,361.0 469.3,347.0 467.7,352.2 466.1,345.0 464.5,359.8 462.9,344.7 461.3,358.1 459.7,340.4 458.1,363.7 456.5,335.0 454.9,360.6 453.3,339.8 451.7,380.2 450.1,337.8 448.5,368.4 446.9,339.2 445.3,358.6 443.7,344.6 442.1,362.6 440.5,344.1 438.9,363.8 437.3,345.7 435.7,386.3 434.1,344.8 432.5,371.8 430.9,340.8 429.3,354.8 427.7,340.9 426.1,355.7 424.5,345.2 422.9,357.3 421.3,344.3 419.7,354.9 418.1,343.1 416.5,357.1" fill="#a2142f"/>
<path d="M418.2 321.1 420.5 346.1 422.8 339.5 425.1 356.1 427.4 333.5 429.7 370.5 432.0 339.5 434.3 344.6 436.6 333.8 438.9 366.1 441.2 344.7 443.5 403.4 445.8 342.3 448.1 356.2 450.4 335.1 452.7 350.2 455.0 347.6 457.3 379.3 459.6 333.6 461.9 354.5 464.2 328.4 466.5 379.7 468.8 343.9 471.1 347.1 473.4 323.6 475.7 383.6 478.0 341.0 480.3 366.0 482.6 334.5 484.9 366.1 487.2 347.5 489.5 370.5 491.8 319.5 494.1 353.0 496.4 326.9 498.7 363.5 501.0 345.7 503.3 365.7 505.6 335.4 507.9 347.9 510.2 324.3 512.5 375.0 514.8 339.1 517.1 365.8 519.4 332.8 521.7 345.9 524.0 335.1 526.3 351.2 528.6 323.2 530.9 361.6 533.2 318.9 535.5 378.3 537.8 345.2 540.1 355.3 542.4 338.0 544.7 349.7 547.0 347.1 549.3 361.6 551.6 332.9 553.9 375.4 556.2 326.1 558.5 348.4 560.8 319.5 563.1 398.0 565.4 334.7 567.7 377.3 570.0 341.4 572.3 354.0 574.6 345.8 576.9 369.3 579.2 329.3 581.5 359.6 583.8 326.1 586.1 367.7 588.4 325.1 590.7 360.1 593.0 346.1 595.3 359.5 597.6 338.4 599.9 383.6 602.2 334.0 604.5 352.9 606.8 345.6 609.1 354.0 611.4 340.4 613.7 344.3 616.0 334.0 618.3 363.5 620.6 341.2 622.9 395.1 625.2 338.0 627.5 361.0 629.8 340.5 632.1 357.4 634.4 328.0 636.7 353.5 639.0 339.1 641.3 358.7 643.6 322.9 645.9 352.1 648.2 319.3 650.5 352.5 652.8 333.0 655.1 358.6 657.4 340.9 659.7 362.3 662.0 324.7 664.3 361.7 666.6 344.7 668.9 357.4 671.2 332.0 673.5 373.6 675.8 337.9 678.1 398.5 680.4 344.1 682.7 366.3 685.0 342.0 687.3 359.5 689.6 337.6 691.9 361.8 694.2 326.3 696.5 385.2 698.8 323.3 701.1 367.8 703.4 335.1 705.7 357.7 708.0 335.7 710.3 384.3 712.6 336.0 714.9 347.3 717.2 329.9 719.5 359.5 721.8 323.3 724.1 361.3 726.4 345.8 728.7 374.4 731.0 338.3 733.3 355.2 735.6 338.7 737.9 364.5 740.2 318.7 742.5 368.7 744.8 333.9 747.1 362.1 749.4 334.0 751.7 383.8 754.0 320.3 756.3 361.6 758.6 324.5 760.9 363.4 763.2 322.7 765.5 346.6 767.8 336.6 770.1 403.2 772.4 344.1 774.7 360.5 777.0 336.9 779.3 362.4 781.6 327.8 783.9 353.6 786.2 343.4 788.5 359.3 790.8 334.5 793.1 349.8 795.4 342.6 797.7 376.1 800.0 335.5 802.3 360.1 804.6 322.8 806.9 355.1 809.2 330.8 811.5 374.5 813.8 326.0 816.1 358.6 818.4 327.4 820.7 363.1 823.0 319.7 825.3 367.8 827.6 341.1 829.9 363.1 832.2 334.9 834.5 349.3 836.8 327.6 839.1 355.6 841.4 339.4 843.7 345.1 846.0 332.2 848.3 354.5 850.6 320.2 852.9 356.0 855.2 342.1 857.5 351.8 859.8 342.3 862.1 353.1 864.4 334.6 866.7 348.9 869.0 337.4 871.3 365.6 873.6 334.8 875.9 358.8 878.2 326.7 880.5 344.5 882.8 319.7 885.1 357.6 887.4 337.5 889.7 376.7 892.0 326.5 894.3 348.3 896.6 340.3 898.9 364.5 901.2 327.2 903.5 354.1 905.8 329.6 908.1 362.7 910.4 345.1 912.7 383.6 915.0 321.3 917.3 367.1 919.6 326.0 921.9 373.9 924.2 338.8 926.5 374.8 928.8 330.8 931.1 348.5 933.4 344.0 935.7 387.5 938.0 321.7 940.3 379.8 942.6 318.5 944.9 358.2 947.2 342.0 949.5 373.7 951.8 322.7 954.1 369.7 956.4 326.5 958.7 353.2 961.0 323.9 963.3 353.1 965.6 331.0 967.9 388.3 970.2 345.2 972.5 383.1 974.8 332.6 977.1 386.3 979.4 339.7 981.7 367.6 984.0 322.7 986.3 363.4 988.6 334.1 990.9 344.4 993.2 324.6 995.5 366.0 997.8 324.6 1000.1 353.5 1002.4 327.2 1004.7 361.5 1007.0 329.6 1009.3 353.9 1011.6 339.5 1013.9 351.3 1016.2 321.1 1018.5 355.2 1020.8 325.9 1023.1 349.6 1025.4 347.1 1027.7 382.4 1030.0 328.8 1032.3 350.4 1034.6 318.6 1036.9 360.2 1039.2 344.1 1041.5 347.6 1043.8 318.2 1046.1 351.3 1048.4 329.4 1050.7 354.1 1053.0 339.4 1055.3 364.9 1057.6 346.2 1059.9 354.0 1062.2 344.8 1064.5 361.3 1066.8 346.1 1069.1 378.5 1071.4 335.8 1073.7 356.3 1076.0 347.0 1078.3 365.9 1080.6 325.0 1082.9 347.5 1085.2 327.6 1087.5 356.8 1089.8 337.6 1092.1 364.0 1094.4 336.8 1096.7 374.4 1099.0 342.6 1101.3 355.7 1103.6 321.7 1105.9 378.4 1108.2 329.2 1110.5 372.2 1112.8 336.8 1115.1 361.8" stroke="#a2142f" stroke-width="1.2" fill="none"/>
<path d="M417.6 341.8 419.9 376.5 422.2 331.2 424.5 378.6 426.8 337.2 429.1 354.7 431.4 329.8 433.7 362.4 436.0 318.4 438.3 348.9 440.6 331.8 442.9 367.2 445.2 342.1 447.5 356.7 449.8 337.2 452.1 348.0 454.4 320.6 456.7 350.4 459.0 319.0 461.3 358.2 463.6 323.2 465.9 380.7 468.2 336.8 470.5 364.8 472.8 327.2 475.1 367.0 477.4 325.4 479.7 372.3 482.0 344.2 484.3 399.0 486.6 318.3 488.9 362.0 491.2 342.6 493.5 348.8 495.8 328.5 498.1 350.6 500.4 342.3 502.7 344.4 505.0 326.7 507.3 359.4 509.6 333.5 511.9 344.1 514.2 322.3 516.5 347.8 518.8 326.3 521.1 368.0 523.4 337.4 525.7 346.2 528.0 338.4 530.3 369.8 532.6 323.1 534.9 357.0 537.2 337.2 539.5 355.7 541.8 347.3 544.1 384.0 546.4 336.1 548.7 354.3 551.0 326.4 553.3 354.8 555.6 338.5 557.9 360.7 560.2 335.6 562.5 406.6 564.8 337.8 567.1 355.3 569.4 343.1 571.7 344.7 574.0 346.1 576.3 373.6 578.6 322.6 580.9 361.2 583.2 325.4 585.5 355.2 587.8 322.0 590.1 362.9 592.4 347.9 594.7 359.4 597.0 347.5 599.3 369.6 601.6 340.6 603.9 347.4 606.2 336.7 608.5 363.2 610.8 322.7 613.1 354.6 615.4 327.1 617.7 384.0 620.0 322.0 622.3 377.9 624.6 328.8 626.9 349.6 629.2 320.9 631.5 377.0 633.8 318.6 636.1 361.9 638.4 319.7 640.7 367.3 643.0 331.3 645.3 361.4 647.6 322.9 649.9 362.4 652.2 319.7 654.5 360.5 656.8 340.6 659.1 383.0 661.4 340.9 663.7 367.5 666.0 346.3 668.3 358.3 670.6 342.1 672.9 346.4 675.2 346.5 677.5 355.4 679.8 337.6 682.1 361.9 684.4 333.9 686.7 347.8 689.0 330.4 691.3 361.9 693.6 328.0 695.9 363.4 698.2 318.5 700.5 375.3 702.8 339.3 705.1 365.3 707.4 327.6 709.7 382.6 712.0 340.0 714.3 348.6 716.6 346.3 718.9 359.1 721.2 341.7 723.5 379.2 725.8 333.2 728.1 371.8 730.4 334.7 732.7 360.6 735.0 344.6 737.3 345.8 739.6 325.2 741.9 354.4 744.2 335.6 746.5 394.3 748.8 335.9 751.1 346.3 753.4 336.1 755.7 359.1 758.0 326.7 760.3 362.9 762.6 331.7 764.9 396.1 767.2 333.2 769.5 348.2 771.8 341.8 774.1 363.2 776.4 346.9 778.7 345.6 781.0 319.6 783.3 381.0 785.6 341.9 787.9 360.4 790.2 332.6 792.5 357.1 794.8 337.4 797.1 364.7 799.4 334.2 801.7 375.5 804.0 342.1 806.3 367.2 808.6 330.2 810.9 353.5 813.2 329.9 815.5 394.6 817.8 334.5 820.1 358.4 822.4 347.1 824.7 412.0 827.0 330.7 829.3 359.0 831.6 330.7 833.9 357.1 836.2 333.2 838.5 369.0 840.8 347.9 843.1 345.8 845.4 322.8 847.7 383.2 850.0 336.0 852.3 353.4 854.6 336.3 856.9 355.6 859.2 344.7 861.5 361.9 863.8 328.4 866.1 398.9 868.4 336.5 870.7 378.4 873.0 325.6 875.3 355.2 877.6 329.7 879.9 347.6 882.2 320.3 884.5 362.5 886.8 326.4 889.1 349.2 891.4 329.7 893.7 364.3 896.0 327.0 898.3 372.7 900.6 330.4 902.9 355.0 905.2 326.7 907.5 346.7 909.8 325.6 912.1 361.7 914.4 328.3 916.7 366.3 919.0 338.1 921.3 366.3 923.6 336.7 925.9 382.9 928.2 347.4 930.5 364.6 932.8 322.1 935.1 390.1 937.4 342.2 939.7 389.0 942.0 320.4 944.3 404.5 946.6 324.8 948.9 381.1 951.2 318.5 953.5 350.8 955.8 333.0 958.1 375.3 960.4 318.4 962.7 404.6 965.0 320.0 967.3 349.5 969.6 337.4 971.9 364.0 974.2 337.5 976.5 354.1 978.8 320.9 981.1 378.2 983.4 336.6 985.7 373.5 988.0 330.8 990.3 350.1 992.6 344.1 994.9 357.8 997.2 335.3 999.5 367.0 1001.8 333.8 1004.1 349.0 1006.4 347.7 1008.7 358.1 1011.0 326.3 1013.3 393.4 1015.6 331.6 1017.9 348.2 1020.2 341.2 1022.5 361.8 1024.8 339.7 1027.1 361.4 1029.4 319.2 1031.7 374.6 1034.0 318.4 1036.3 364.5 1038.6 326.4 1040.9 357.0 1043.2 347.1 1045.5 369.3 1047.8 320.0 1050.1 347.4 1052.4 318.6 1054.7 350.4 1057.0 345.6 1059.3 371.8 1061.6 322.2 1063.9 358.1 1066.2 327.5 1068.5 348.7 1070.8 343.9 1073.1 401.0 1075.4 329.9 1077.7 355.7 1080.0 319.3 1082.3 367.5 1084.6 330.5 1086.9 353.5 1089.2 339.9 1091.5 355.1 1093.8 322.8 1096.1 379.9 1098.4 326.0 1100.7 356.0 1103.0 328.0 1105.3 367.2 1107.6 318.3 1109.9 357.0 1112.2 338.6 1114.5 355.5" stroke="#a2142f" stroke-width="1.2" fill="none"/>
<path d="M519.3 303.6L518.9 314.5M558.0 318.3L558.7 324.9M461.5 356.3L460.7 362.4M1077.0 328.4L1077.3 351.7M647.3 307.4L648.0 321.6M620.2 305.5L620.8 336.7M712.4 320.4L712.3 330.2M580.4 321.0L581.9 329.1M1052.5 312.3L1051.4 346.7M613.8 328.3L614.5 334.9M450.2 341.4L449.0 365.8M1004.1 338.8L1004.1 345.3M924.3 340.4L922.9 372.0M545.7 326.4L544.4 370.3M680.0 347.0L681.2 353.6M529.2 283.3L530.0 330.5M1044.7 330.5L1043.3 355.1M1053.9 347.1L1052.6 372.0M455.8 340.9L454.6 372.0M570.0 354.5L571.0 372.0M704.6 291.4L704.5 311.3M849.7 336.0L850.7 350.7M996.3 344.3L996.6 372.0M1043.6 316.9L1044.4 323.2M1067.7 303.5L1066.6 334.9M818.6 320.3L819.3 354.5M935.0 346.6L934.4 372.0M1040.6 300.8L1041.0 328.7M934.5 344.2L933.5 358.4M741.5 341.7L741.0 372.0M994.6 328.3L995.5 345.1M855.7 325.9L854.4 355.1M617.8 353.8L616.8 365.5M439.2 290.2L438.5 302.4M950.1 280.3L949.2 310.0M432.6 326.2L433.6 335.4M967.9 283.5L969.1 323.8M961.5 304.0L962.5 343.4M552.3 290.2L552.1 314.7M1014.3 353.9L1014.7 365.9M806.2 325.2L806.5 340.2M1081.7 304.2L1082.1 312.8M1068.0 310.5L1068.4 345.5M434.8 296.5L436.0 344.6M582.3 314.2L582.7 322.0M985.3 296.2L983.9 303.0M785.5 347.6L786.2 366.5M520.0 329.1L520.2 372.0M774.6 286.9L775.4 297.1M660.7 348.2L660.2 358.4M686.7 320.9L685.9 338.3M495.3 274.3L495.3 289.0M840.9 342.4L840.1 354.6M995.3 336.1L995.5 361.7M687.0 324.8L687.1 332.4M638.5 318.0L639.1 325.3M1048.0 340.6L1046.6 362.2M857.7 355.6L858.5 372.0M1097.5 324.7L1096.4 334.6M1005.4 351.0L1005.3 361.9M565.8 328.2L565.6 339.1M906.0 302.3L907.4 309.4M527.3 339.6L528.2 347.0M533.0 344.3L534.2 358.3M862.4 289.4L861.7 302.3M439.1 299.8L439.1 326.0M578.9 288.1L580.0 297.1M1093.1 275.2L1094.1 320.3M623.8 311.5L624.1 336.8M917.9 324.1L917.9 362.5M911.5 330.5L910.7 338.5M794.9 324.3L795.0 363.5M1003.4 346.8L1004.5 364.5M559.5 295.6L560.2 310.1M515.3 354.5L516.3 372.0M970.7 342.4L971.0 361.5M658.4 277.9L657.2 291.1M558.1 279.1L557.2 296.5M778.6 287.1L778.4 313.6M897.9 332.9L899.0 344.3M784.1 329.4L784.0 351.4M981.5 303.9L982.9 318.4M660.3 337.0L660.2 345.1M976.2 311.7L976.9 317.9M1057.9 344.4L1058.5 372.0M824.2 340.8L822.8 372.0M887.3 301.8L887.2 314.6M815.8 281.2L816.0 317.3M626.8 332.9L628.3 350.6M591.3 283.6L592.3 298.9M920.7 329.7L919.9 342.6M520.2 336.6L519.6 351.1M700.6 292.4L700.5 307.9M677.8 343.2L677.4 351.0M1038.6 316.9L1038.2 356.5M791.8 334.0L792.0 352.4M603.8 326.0L602.5 335.8M722.9 339.6L722.7 357.5M460.5 324.1L459.2 345.0M612.2 326.3L610.7 361.5M893.6 322.4L894.7 331.4M589.3 293.4L588.0 315.3M627.1 334.0L627.6 370.1M1053.9 272.1L1054.7 311.2M607.3 318.3L606.0 326.9M818.9 343.7L817.6 359.6M1108.6 348.5L1107.2 372.0M480.6 347.8L481.7 362.7M703.2 341.4L703.2 371.6M976.0 355.2L975.0 367.3M951.9 356.4L953.4 370.7M851.0 317.0L851.3 324.0M913.4 337.0L914.5 366.2M518.9 293.3L517.7 306.4M460.7 334.0L461.0 341.2M505.0 310.8L505.8 322.8M1044.4 349.6L1044.3 359.1M542.7 290.5L542.6 306.8M899.5 293.9L898.2 341.9M472.7 335.0L471.9 372.0M1037.0 329.0L1036.3 369.6M954.5 333.4L954.3 371.6M1006.0 331.5L1004.5 372.0M1099.2 277.1L1098.0 286.2M870.3 331.8L870.5 353.6M1033.9 320.0L1035.3 357.3M1112.4 297.8L1111.7 344.8M482.4 346.7L482.5 372.0M451.0 340.9L451.0 349.2M935.7 335.7L936.5 350.9M825.8 318.0L825.9 327.6M588.8 293.5L588.9 329.7M889.6 262.6L888.2 301.0M877.4 349.4L875.9 366.6M656.1 322.4L655.9 328.4M454.2 323.5L453.1 369.4M1104.8 307.7L1104.3 350.8M795.9 318.3L794.9 364.6M485.7 333.7L486.5 368.8M973.9 320.2L973.3 370.5M1028.7 346.3L1029.2 358.8M678.4 297.3L678.7 305.4M971.8 289.0L972.4 329.2M465.6 348.4L464.9 372.0M906.2 297.9L905.2 310.1M1097.6 308.9L1098.7 335.8M939.6 341.2L939.6 348.5M605.5 273.3L606.1 281.9M693.2 326.1L693.0 372.0M885.2 310.2L883.8 352.8M722.6 353.4L721.5 362.7M1110.3 326.7L1109.2 356.4M963.6 325.7L962.2 358.7M719.7 335.0L720.4 358.4M907.9 345.1L909.3 367.1M467.1 307.4L466.8 338.7M650.5 272.3L651.9 278.5M445.7 331.2L444.5 372.0M655.7 320.6L655.3 348.0M541.5 299.4L541.8 320.2M756.9 340.0L757.3 352.6M648.3 340.9L646.9 353.4M459.7 355.8L460.9 372.0M529.6 353.9L531.1 363.7M704.0 301.9L703.4 334.3M837.0 315.6L836.4 322.7M603.2 341.7L603.6 358.5M697.7 270.6L697.4 283.4M1076.9 346.5L1076.9 352.5M703.5 335.8L704.6 367.9M754.3 308.9L754.7 352.5M764.6 349.9L763.4 366.8M1062.7 322.1L1062.2 333.4M534.8 302.1L535.9 332.0M743.6 345.8L744.9 353.5M982.4 352.1L981.8 372.0M788.1 291.9L786.8 314.1M651.0 353.9L651.9 372.0M680.8 294.6L679.9 308.2M554.8 337.8L554.0 361.0M885.0 324.0L884.7 349.2M1006.1 349.5L1004.8 372.0M925.1 356.5L925.6 372.0M453.1 286.1L454.2 304.8M965.2 321.3L964.7 340.0M938.6 349.1L939.1 367.7M681.9 317.2L680.8 323.6M616.4 295.0L616.0 311.2M1087.5 323.4L1086.4 369.6M515.1 276.6L513.9 307.8M968.5 295.7L967.8 311.9M606.4 348.4L606.0 372.0M796.7 347.3L795.3 359.7M907.4 345.4L907.8 363.5M1055.5 279.5L1055.9 292.6M956.5 335.5L955.9 353.2M474.4 321.1L474.2 329.5M1021.6 336.5L1020.9 362.0M1095.1 311.8L1093.9 320.1M444.1 307.7L445.4 327.4M624.7 352.8L626.0 372.0M1033.0 338.0L1032.9 372.0M788.4 334.1L789.4 364.3M424.7 325.5L424.7 342.1M953.2 307.8L954.5 317.9M1105.4 320.0L1105.7 332.7M522.2 350.6L523.2 363.0M1021.8 348.2L1022.0 372.0M850.3 285.8L850.5 322.1M843.0 344.3L843.4 352.7M451.0 336.7L452.0 356.5M1095.5 335.6L1094.3 371.3M1113.2 310.0L1113.9 342.2M508.6 353.5L509.3 361.1M987.5 329.5L989.0 355.0M662.2 347.8L661.7 372.0M438.9 283.3L439.4 325.1M781.5 325.0L781.1 336.2M1005.0 302.4L1005.3 343.1M823.7 317.8L822.2 367.7M458.0 311.0L459.0 357.6M1019.4 328.9L1018.5 371.3M717.5 290.3L717.5 298.2M807.9 320.6L806.9 339.5M701.6 310.2L702.9 340.2M1090.6 337.6L1091.3 372.0M794.7 303.2L795.7 343.2M987.4 312.1L988.2 330.0M1078.2 304.3L1079.4 319.8M831.8 353.5L832.3 372.0M1009.9 285.3L1008.6 297.8M564.9 296.8L563.7 315.1M552.4 349.8L553.1 372.0M933.8 314.7L933.2 327.4M889.5 341.9L890.2 372.0M1082.5 282.8L1082.3 289.4M668.2 291.4L669.3 298.5M544.1 332.1L543.6 348.0M709.5 294.3L708.3 325.5M1038.9 302.5L1039.9 313.3M799.2 313.9L798.6 362.3M636.8 333.5L636.5 360.4M766.7 294.3L767.6 301.3M927.5 280.5L926.8 291.6M491.7 316.1L493.1 358.0M906.8 337.0L905.4 344.7M722.2 345.6L723.0 351.7M1029.0 329.6L1030.1 341.1M978.1 310.2L978.5 316.4M952.9 352.7L952.0 362.8M451.8 309.3L450.7 330.7M790.9 343.1L791.7 372.0M456.2 342.7L456.9 362.6M665.2 336.1L666.0 360.7M537.9 326.9L539.3 334.6M760.0 299.1L760.3 314.3M567.8 329.6L569.2 359.2M638.6 267.7L640.0 288.7M941.7 354.1L941.9 372.0M957.3 326.5L958.1 344.7M943.8 323.1L942.8 369.0M927.7 354.1L929.2 364.4M665.8 348.5L665.7 372.0M445.5 307.7L445.5 344.0M461.0 353.2L461.6 372.0M821.9 351.9L823.0 361.1M1090.1 294.6L1089.4 322.5M774.6 319.3L775.3 365.6M742.1 315.7L743.0 337.5M1017.7 328.9L1017.4 372.0M678.3 335.5L678.1 372.0M574.4 317.2L575.5 330.4M1080.2 336.3L1079.7 357.6M419.9 333.4L420.9 347.8M789.5 324.7L790.6 363.2M541.2 272.9L540.8 279.5M591.3 304.7L590.7 336.4M1072.8 315.0L1071.9 321.0M886.8 339.7L885.9 346.3M800.5 313.6L801.6 350.5M492.8 303.7L492.2 314.2M1063.1 276.1L1062.4 301.4M721.8 339.3L722.3 372.0M488.5 314.3L487.8 323.6M799.5 326.6L798.9 343.7M477.0 349.9L478.3 372.0M1011.7 335.9L1013.1 363.6M701.2 302.9L702.0 331.1M621.0 306.2L621.9 316.0M594.4 333.5L594.0 356.6M563.4 346.9L562.9 372.0M552.9 296.1L553.8 319.2M837.9 318.2L838.0 347.3M535.8 298.9L535.0 331.1M798.7 288.5L798.1 304.4M1028.3 338.2L1029.0 360.9M932.3 317.1L932.0 332.7M794.3 317.7L795.2 330.3M717.4 347.7L716.6 354.7M659.4 269.3L657.9 312.9" stroke="#4dbeee" stroke-width="0.7" stroke-opacity="0.65" fill="none"/>
<path d="M516.6 367.2L518.1 327.2L519.6 367.2M491.5 352.1L493.0 312.1L494.5 352.1M548.1 389.3L549.6 349.3L551.1 389.3M1097.4 398.1L1098.9 358.1L1100.4 398.1M871.0 383.7L872.5 343.7L874.0 383.7M718.8 392.7L720.3 352.7L721.8 392.7M516.2 361.6L517.7 321.6L519.2 361.6M980.7 387.7L982.2 347.7L983.7 387.7M861.6 369.2L863.1 329.2L864.6 369.2M599.7 396.6L601.2 356.6L602.7 396.6M750.6 389.1L752.1 349.1L753.6 389.1M1007.0 357.4L1008.5 317.4L1010.0 357.4M1086.1 352.8L1087.6 312.8L1089.1 352.8M1079.0 372.3L1080.5 332.3L1082.0 372.3M824.5 370.7L826.0 330.7L827.5 370.7M785.8 398.6L787.3 358.6L788.8 398.6M708.9 369.7L710.4 329.7L711.9 369.7M422.5 370.1L424.0 330.1L425.5 370.1M622.3 391.6L623.8 351.6L625.3 391.6M991.6 360.5L993.1 320.5L994.6 360.5M667.6 395.9L669.1 355.9L670.6 395.9M874.3 373.6L875.8 333.6L877.3 373.6M1099.9 397.3L1101.4 357.3L1102.9 397.3M968.9 351.7L970.4 311.7L971.9 351.7M637.6 381.6L639.1 341.6L640.6 381.6M582.0 342.9L583.5 302.9L585.0 342.9M1061.1 378.8L1062.6 338.8L1064.1 378.8M564.1 356.9L565.6 316.9L567.1 356.9M914.0 375.5L915.5 335.5L917.0 375.5M861.2 398.8L862.7 358.8L864.2 398.8M809.0 386.5L810.5 346.5L812.0 386.5M633.6 370.0L635.1 330.0L636.6 370.0M1095.0 355.6L1096.5 315.6L1098.0 355.6M953.1 398.3L954.6 358.3L956.1 398.3M703.8 375.1L705.3 335.1L706.8 375.1M531.8 357.0L533.3 317.0L534.8 357.0M701.1 391.8L702.6 351.8L704.1 391.8M448.2 384.9L449.7 344.9L451.2 384.9M546.3 388.1L547.8 348.1L549.3 388.1M582.5 359.4L584.0 319.4L585.5 359.4M525.8 388.2L527.3 348.2L528.8 388.2M790.2 347.1L791.7 307.1L793.2 347.1M517.9 352.8L519.4 312.8L520.9 352.8M479.7 372.5L481.2 332.5L482.7 372.5M465.4 341.7L466.9 301.7L468.4 341.7M1032.6 386.4L1034.1 346.4L1035.6 386.4M472.3 399.8L473.8 359.8L475.3 399.8M1084.8 363.6L1086.3 323.6L1087.8 363.6M1063.9 354.1L1065.4 314.1L1066.9 354.1M772.5 344.5L774.0 304.5L775.5 344.5M1033.5 394.1L1035.0 354.1L1036.5 394.1M432.8 399.2L434.3 359.2L435.8 399.2M941.7 369.7L943.2 329.7L944.7 369.7M786.3 381.9L787.8 341.9L789.3 381.9M842.8 391.1L844.3 351.1L845.8 391.1M1112.9 364.5L1114.4 324.5L1115.9 364.5M528.6 374.1L530.1 334.1L531.6 374.1M631.8 368.2L633.3 328.2L634.8 368.2M895.1 346.0L896.6 306.0L898.1 346.0M542.5 350.7L544.0 310.7L545.5 350.7M1057.6 393.7L1059.1 353.7L1060.6 393.7M530.2 398.3L531.7 358.3L533.2 398.3M690.6 366.0L692.1 326.0L693.6 366.0M938.0 399.8L939.5 359.8L941.0 399.8M1020.9 392.1L1022.4 352.1L1023.9 392.1M965.6 346.4L967.1 306.4L968.6 346.4M986.9 382.3L988.4 342.3L989.9 382.3M700.5 360.0L702.0 320.0L703.5 360.0M678.8 365.1L680.3 325.1L681.8 365.1M797.2 396.5L798.7 356.5L800.2 396.5M538.6 359.1L540.1 319.1L541.6 359.1M790.2 358.5L791.7 318.5L793.2 358.5M802.3 399.8L803.8 359.8L805.3 399.8M639.8 343.3L641.3 303.3L642.8 343.3M518.1 396.9L519.6 356.9L521.1 396.9M479.7 377.2L481.2 337.2L482.7 377.2M666.2 376.8L667.7 336.8L669.2 376.8M793.2 377.5L794.7 337.5L796.2 377.5M1102.1 340.5L1103.6 300.5L1105.1 340.5M553.6 393.8L555.1 353.8L556.6 393.8M431.0 354.5L432.5 314.5L434.0 354.5M625.6 349.3L627.1 309.3L628.6 349.3M743.4 395.1L744.9 355.1L746.4 395.1M820.0 400.0L821.5 360.0L823.0 400.0M652.1 389.7L653.6 349.7L655.1 389.7M1053.0 399.0L1054.5 359.0L1056.0 399.0M566.6 398.2L568.1 358.2L569.6 398.2M600.1 353.0L601.6 313.0L603.1 353.0M596.2 399.5L597.7 359.5L599.2 399.5M1090.4 389.3L1091.9 349.3L1093.4 389.3M749.8 397.9L751.3 357.9L752.8 397.9M661.9 395.3L663.4 355.3L664.9 395.3M452.3 373.0L453.8 333.0L455.3 373.0M685.5 347.0L687.0 307.0L688.5 347.0M976.7 349.8L978.2 309.8L979.7 349.8M1000.8 396.5L1002.3 356.5L1003.8 396.5M1079.1 352.7L1080.6 312.7L1082.1 352.7M555.4 350.1L556.9 310.1L558.4 350.1M444.0 390.2L445.5 350.2L447.0 390.2M540.9 392.2L542.4 352.2L543.9 392.2M465.4 383.8L466.9 343.8L468.4 383.8M1018.6 356.6L1020.1 316.6L1021.6 356.6M616.9 340.7L618.4 300.7L619.9 340.7M998.9 373.1L1000.4 333.1L1001.9 373.1M618.3 381.5L619.8 341.5L621.3 381.5M489.2 384.0L490.7 344.0L492.2 384.0M606.0 378.8L607.5 338.8L609.0 378.8M843.1 390.4L844.6 350.4L846.1 390.4M1093.7 361.9L1095.2 321.9L1096.7 361.9M860.3 370.3L861.8 330.3L863.3 370.3M976.1 384.8L977.6 344.8L979.1 384.8M773.8 361.9L775.3 321.9L776.8 361.9M1059.8 356.5L1061.3 316.5L1062.8 356.5M1014.1 393.2L1015.6 353.2L1017.1 393.2M1104.9 382.4L1106.4 342.4L1107.9 382.4M1004.5 367.5L1006.0 327.5L1007.5 367.5M902.8 359.0L904.3 319.0L905.8 359.0M995.9 398.2L997.4 358.2L998.9 398.2M1039.1 396.8L1040.6 356.8L1042.1 396.8M888.6 356.7L890.1 316.7L891.6 356.7M471.8 358.1L473.3 318.1L474.8 358.1M721.9 392.1L723.4 352.1L724.9 392.1M1090.5 382.4L1092.0 342.4L1093.5 382.4M898.6 363.5L900.1 323.5L901.6 363.5M694.8 375.1L696.3 335.1L697.8 375.1M1034.4 356.5L1035.9 316.5L1037.4 356.5M667.2 392.3L668.7 352.3L670.2 392.3M690.1 380.5L691.6 340.5L693.1 380.5M790.7 385.9L792.2 345.9L793.7 385.9M888.0 352.4L889.5 312.4L891.0 352.4M814.2 385.8L815.7 345.8L817.2 385.8M649.0 360.4L650.5 320.4L652.0 360.4M808.5 379.6L810.0 339.6L811.5 379.6M662.2 393.5L663.7 353.5L665.2 393.5M883.2 367.3L884.7 327.3L886.2 367.3M805.2 394.5L806.7 354.5L808.2 394.5M491.8 396.3L493.3 356.3L494.8 396.3M856.0 350.8L857.5 310.8L859.0 350.8M1071.2 348.0L1072.7 308.0L1074.2 348.0M850.5 384.8L852.0 344.8L853.5 384.8M468.2 383.8L469.7 343.8L471.2 383.8M801.5 368.9L803.0 328.9L804.5 368.9M530.6 367.9L532.1 327.9L533.6 367.9M707.7 370.1L709.2 330.1L710.7 370.1M531.9 389.2L533.4 349.2L534.9 389.2M1055.8 355.9L1057.3 315.9L1058.8 355.9M955.3 387.4L956.8 347.4L958.3 387.4M814.3 349.8L815.8 309.8L817.3 349.8M624.1 344.4L625.6 304.4L627.1 344.4M488.9 389.0L490.4 349.0L491.9 389.0M911.2 368.8L912.7 328.8L914.2 368.8M585.2 361.9L586.7 321.9L588.2 361.9M1049.5 391.2L1051.0 351.2L1052.5 391.2M1027.9 342.7L1029.4 302.7L1030.9 342.7M530.0 379.0L531.5 339.0L533.0 379.0M1110.9 374.9L1112.4 334.9L1113.9 374.9M1091.3 384.6L1092.8 344.6L1094.3 384.6M471.9 381.9L473.4 341.9L474.9 381.9M772.5 397.4L774.0 357.4L775.5 397.4M619.7 344.8L621.2 304.8L622.7 344.8" fill="none" stroke="#4dbeee" stroke-width="0.9" stroke-opacity="0.85"/>
<path d="M442.1 350L442.4 465.6H445.2L445.5 350Z" fill="#a2142f"/>
<path d="M479.9 350L480.2 450.4H483.0L483.3 350Z" fill="#a2142f"/>
<path d="M517.8 350L518.1 473.3H520.9L521.2 350Z" fill="#a2142f"/>
<path d="M555.6 350L555.9 456.8H558.7L559.0 350Z" fill="#a2142f"/>
<path d="M593.4 350L593.7 454.8H596.5L596.8 350Z" fill="#a2142f"/>
<path d="M631.2 350L631.6 452.4H634.4L634.7 350Z" fill="#a2142f"/>
<path d="M669.1 350L669.4 458.6H672.2L672.5 350Z" fill="#a2142f"/>
<path d="M706.9 350L707.2 438.7H710.0L710.3 350Z" fill="#a2142f"/>
<path d="M744.7 350L745.0 489H747.8L748.1 350Z" fill="#a2142f"/>
<path d="M782.6 350L782.9 486.5H785.7L786.0 350Z" fill="#a2142f"/>
<path d="M820.4 350L820.7 469.6H823.5L823.8 350Z" fill="#a2142f"/>
<path d="M858.2 350L858.5 489.5H861.3L861.6 350Z" fill="#a2142f"/>
<path d="M896.1 350L896.4 462.2H899.2L899.5 350Z" fill="#a2142f"/>
<path d="M933.9 350L934.2 455.4H937.0L937.3 350Z" fill="#a2142f"/>
<path d="M971.7 350L972.0 448.9H974.8L975.1 350Z" fill="#a2142f"/>
<path d="M1009.5 350L1009.9 486.5H1012.6L1013.0 350Z" fill="#a2142f"/>
<path d="M1047.4 350L1047.7 480H1050.5L1050.8 350Z" fill="#a2142f"/>
<path d="M1085.2 350L1085.5 486.5H1088.3L1088.6 350Z" fill="#a2142f"/></g>
<rect x="418.5" y="188.5" width="696.0" height="359.0" fill="none" stroke="#262626" stroke-width="1.1"/>
<path d="M418.5 188.50 h6 M1114.5 188.50 h-6" stroke="#262626" stroke-width="1"/>
<text x="412" y="193.1" font-size="13" fill="#404040" text-anchor="end">50</text>
<path d="M418.5 233.38 h6 M1114.5 233.38 h-6" stroke="#262626" stroke-width="1"/>
<text x="412" y="237.975" font-size="13" fill="#404040" text-anchor="end">45</text>
<path d="M418.5 278.25 h6 M1114.5 278.25 h-6" stroke="#262626" stroke-width="1"/>
<text x="412" y="282.85" font-size="13" fill="#404040" text-anchor="end">40</text>
<path d="M418.5 323.12 h6 M1114.5 323.12 h-6" stroke="#262626" stroke-width="1"/>
<text x="412" y="327.725" font-size="13" fill="#404040" text-anchor="end">35</text>
<path d="M418.5 368.00 h6 M1114.5 368.00 h-6" stroke="#262626" stroke-width="1"/>
<text x="412" y="372.6" font-size="13" fill="#404040" text-anchor="end">30</text>
<path d="M418.5 412.88 h6 M1114.5 412.88 h-6" stroke="#262626" stroke-width="1"/>
<text x="412" y="417.475" font-size="13" fill="#404040" text-anchor="end">25</text>
<path d="M418.5 457.75 h6 M1114.5 457.75 h-6" stroke="#262626" stroke-width="1"/>
<text x="412" y="462.35" font-size="13" fill="#404040" text-anchor="end">20</text>
<path d="M418.5 502.62 h6 M1114.5 502.62 h-6" stroke="#262626" stroke-width="1"/>
<text x="412" y="507.225" font-size="13" fill="#404040" text-anchor="end">15</text>
<path d="M418.5 547.50 h6 M1114.5 547.50 h-6" stroke="#262626" stroke-width="1"/>
<text x="412" y="552.1" font-size="13" fill="#404040" text-anchor="end">10</text>
<path d="M418.50 547.5 v-6 M418.50 188.5 v6" stroke="#262626" stroke-width="1"/>
<text x="418.5" y="566" font-size="13" fill="#404040" text-anchor="middle">0</text>
<path d="M534.50 547.5 v-6 M534.50 188.5 v6" stroke="#262626" stroke-width="1"/>
<text x="534.5" y="566" font-size="13" fill="#404040" text-anchor="middle">0.2</text>
<path d="M650.50 547.5 v-6 M650.50 188.5 v6" stroke="#262626" stroke-width="1"/>
<text x="650.5" y="566" font-size="13" fill="#404040" text-anchor="middle">0.4</text>
<path d="M766.50 547.5 v-6 M766.50 188.5 v6" stroke="#262626" stroke-width="1"/>
<text x="766.5" y="566" font-size="13" fill="#404040" text-anchor="middle">0.6</text>
<path d="M882.50 547.5 v-6 M882.50 188.5 v6" stroke="#262626" stroke-width="1"/>
<text x="882.5" y="566" font-size="13" fill="#404040" text-anchor="middle">0.8</text>
<path d="M998.50 547.5 v-6 M998.50 188.5 v6" stroke="#262626" stroke-width="1"/>
<text x="998.5" y="566" font-size="13" fill="#404040" text-anchor="middle">1</text>
<path d="M1114.50 547.5 v-6 M1114.50 188.5 v6" stroke="#262626" stroke-width="1"/>
<text x="1114.5" y="566" font-size="13" fill="#404040" text-anchor="middle">1.2</text>
<text x="765" y="176" font-size="13.9" fill="#262626" text-anchor="middle" font-weight="bold" textLength="141.6" lengthAdjust="spacingAndGlyphs">Time-Domain Features</text>
<text x="766" y="583.5" font-size="13" fill="#404040" text-anchor="middle" font-weight="bold">Time</text>
<text x="1114.8" y="583.5" font-size="13" fill="#404040" text-anchor="end">sec</text>
<text transform="translate(391,368.7) rotate(-90)" font-size="13" font-weight="bold" fill="#454545" text-anchor="middle" textLength="58.7" lengthAdjust="spacingAndGlyphs">flow/Data</text>
<text x="1109.8" y="527.6" font-size="10.7" fill="#383838" text-anchor="end">flow/Data:Member 96</text>
<text x="1109.8" y="540.5" font-size="10.7" fill="#383838" text-anchor="end">faultCode=110</text>
<rect x="974.5" y="199.5" width="129" height="111" fill="#ffffff" stroke="#262626" stroke-width="1"/>
<path d="M977.5 208.50 H1017.3" stroke="#a2142f" stroke-width="1"/>
<text x="1021.4" y="212.8" font-size="12" fill="#262626">faultCode=110</text>
<path d="M977.5 224.50 H1017.3" stroke="#4dbeee" stroke-width="1"/>
<text x="1021.4" y="228.8" font-size="12" fill="#262626">faultCode=101</text>
<path d="M977.5 239.50 H1017.3" stroke="#77ac30" stroke-width="1"/>
<text x="1021.4" y="243.8" font-size="12" fill="#262626">faultCode=11</text>
<path d="M977.5 255.50 H1017.3" stroke="#7e2f8e" stroke-width="1"/>
<text x="1021.4" y="259.8" font-size="12" fill="#262626">faultCode=1</text>
<path d="M977.5 270.50 H1017.3" stroke="#edb120" stroke-width="1"/>
<text x="1021.4" y="274.8" font-size="12" fill="#262626">faultCode=10</text>
<path d="M977.5 286.50 H1017.3" stroke="#d95319" stroke-width="1"/>
<text x="1021.4" y="290.8" font-size="12" fill="#262626">faultCode=100</text>
<path d="M977.5 301.50 H1017.3" stroke="#0072bd" stroke-width="1"/>
<text x="1021.4" y="305.8" font-size="12" fill="#262626">faultCode=0</text>
<g fill="none" stroke="#6a6a6a" stroke-width="1.2" stroke-linejoin="round" stroke-linecap="round">
<path d="M1017.5 178.5 V183.5 H1031 V178.5 H1024.5"/>
<path d="M1020 181 Q1020 174 1027.5 173.5" />
<path d="M1025.5 170.8 L1028.8 173.5 L1025.8 176.2"/>
<path d="M1021.5 181 Q1022 176 1027 175.8"/>
</g>
<path d="M1033 181 L1033 185 L1029 185 Z" fill="#6a6a6a"/>
<path d="M1041 184 L1037.8 177.5 Q1037.2 175.6 1039 176 L1040.6 178 V172 Q1040.8 170.5 1042 171 V176 V170.3 Q1043.3 168.8 1044.6 170.3 V176 V170.8 Q1046 169.5 1047.2 170.8 V176.5 V172.5 Q1048.6 171.5 1049.7 172.8 V179.5 Q1049.5 182 1048 184 Z" fill="none" stroke="#6a6a6a" stroke-width="1.1" stroke-linejoin="round"/>
<circle cx="1063.7" cy="175.3" r="5.6" fill="none" stroke="#6a6a6a" stroke-width="1.2"/>
<path d="M1067.8 179.4 L1072.6 184.3 M1060.8 175.3 H1066.6 M1063.7 172.4 V178.2" stroke="#6a6a6a" stroke-width="1.2"/>
<circle cx="1083.9" cy="175.3" r="5.6" fill="none" stroke="#6a6a6a" stroke-width="1.2"/>
<path d="M1088 179.4 L1092.8 184.3 M1081 175.3 H1086.8" stroke="#6a6a6a" stroke-width="1.2"/>
<path d="M1097.5 177.5 L1105.2 169.8 L1113 177.5 M1099.8 175.6 V184.3 H1103.3 V179 H1107.3 V184.3 H1110.8 V175.6" fill="none" stroke="#6a6a6a" stroke-width="1.1" stroke-linejoin="miter"/>
<path d="M1109.5 170 L1112 170 L1112 172.5 Z" fill="#6a6a6a"/>
<rect x="418.5" y="597.5" width="696.0" height="39.0" fill="#ffffff"/>
<path d="M534.50 597.5 V636.5" stroke="#d8d8d8" stroke-width="1"/>
<path d="M534.50 636.5 v-5 M534.50 597.5 v5" stroke="#262626" stroke-width="1"/>
<path d="M650.50 597.5 V636.5" stroke="#d8d8d8" stroke-width="1"/>
<path d="M650.50 636.5 v-5 M650.50 597.5 v5" stroke="#262626" stroke-width="1"/>
<path d="M766.50 597.5 V636.5" stroke="#d8d8d8" stroke-width="1"/>
<path d="M766.50 636.5 v-5 M766.50 597.5 v5" stroke="#262626" stroke-width="1"/>
<path d="M882.50 597.5 V636.5" stroke="#d8d8d8" stroke-width="1"/>
<path d="M882.50 636.5 v-5 M882.50 597.5 v5" stroke="#262626" stroke-width="1"/>
<path d="M998.50 597.5 V636.5" stroke="#d8d8d8" stroke-width="1"/>
<path d="M998.50 636.5 v-5 M998.50 597.5 v5" stroke="#262626" stroke-width="1"/>
<polygon points="418.5,614.1 430.3,613.8 442.1,614.9 453.9,614.7 465.7,613.9 477.5,613.1 489.3,612.5 501.1,612.7 512.9,612.8 524.7,613.1 536.5,612.1 548.3,612.1 560.1,612.1 571.9,612.9 583.7,614.2 595.4,614.2 607.2,614.0 619.0,613.6 630.8,613.9 642.6,614.4 654.4,614.5 666.2,613.8 678.0,612.4 689.8,611.9 701.6,611.8 713.4,612.5 725.2,613.0 737.0,612.9 748.8,612.9 760.6,612.4 772.4,613.4 784.2,614.7 796.0,614.8 807.8,614.4 819.6,613.7 831.4,613.1 843.2,613.3 855.0,613.9 866.8,613.4 878.6,612.8 890.4,611.7 902.2,611.5 914.0,612.4 925.8,613.2 937.6,614.2 949.3,613.6 961.1,613.4 972.9,613.3 984.7,614.1 996.5,614.6 1008.3,614.5 1020.1,613.3 1031.9,612.7 1043.7,612.7 1055.5,612.1 1067.3,613.4 1079.1,612.8 1090.9,612.5 1102.7,611.8 1114.5,613.0 1114.5,620.1 1102.7,620.2 1090.9,620.0 1079.1,620.6 1067.3,621.1 1055.5,620.3 1043.7,620.5 1031.9,620.1 1020.1,621.6 1008.3,622.3 996.5,622.9 984.7,622.3 972.9,621.4 961.1,620.7 949.3,621.1 937.6,621.9 925.8,621.1 914.0,619.5 902.2,619.7 890.4,619.5 878.6,621.3 866.8,621.2 855.0,621.5 843.2,621.0 831.4,621.3 819.6,620.9 807.8,622.7 796.0,622.7 784.2,622.1 772.4,621.3 760.6,620.8 748.8,620.1 737.0,620.6 725.2,621.3 713.4,620.4 701.6,619.6 689.8,619.8 678.0,621.1 666.2,621.5 654.4,622.2 642.6,621.8 630.8,621.5 619.0,621.8 607.2,621.7 595.4,622.6 583.7,621.9 571.9,621.0 560.1,619.6 548.3,620.0 536.5,620.5 524.7,620.4 512.9,620.6 501.1,620.3 489.3,620.1 477.5,620.8 465.7,621.3 453.9,622.3 442.1,623.0 430.3,621.9 418.5,620.9" fill="#0072bd"/>
<path d="M418.5 622.0 430.3 621.8 442.1 623.2 453.9 623.1 465.7 622.1 477.5 620.5 489.3 620.7 501.1 620.5 512.9 620.3 524.7 621.5 536.5 620.6 548.3 620.6 560.1 620.3 571.9 620.9 583.7 621.8 595.4 622.7 607.2 622.6 619.0 622.7 630.8 622.1 642.6 621.9 654.4 622.2 666.2 621.6 678.0 621.2 689.8 620.0 701.6 619.7 713.4 620.4 725.2 622.0 737.0 621.5 748.8 621.0 760.6 620.6 772.4 621.8 784.2 621.9 796.0 623.7 807.8 623.0 819.6 620.4 831.4 622.1 843.2 621.6 855.0 621.2 866.8 622.1 878.6 620.9 890.4 620.4 902.2 620.8 914.0 619.7 925.8 621.6 937.6 622.0 949.3 621.4 961.1 621.5 972.9 622.1 984.7 622.4 996.5 623.7 1008.3 622.3 1020.1 622.4 1031.9 620.1 1043.7 621.4 1055.5 620.2 1067.3 621.4 1079.1 620.4 1090.9 619.7 1102.7 620.4 1114.5 619.7" stroke="#0072bd" stroke-width="0.7" fill="none"/>
<path d="M418.5 620.6 430.3 622.0 442.1 623.7 453.9 622.4 465.7 620.8 477.5 621.0 489.3 620.3 501.1 620.2 512.9 620.7 524.7 620.6 536.5 620.8 548.3 620.4 560.1 620.7 571.9 622.0 583.7 622.5 595.4 622.6 607.2 621.2 619.0 622.0 630.8 621.5 642.6 622.3 654.4 622.0 666.2 622.0 678.0 621.0 689.8 619.5 701.6 619.2 713.4 620.6 725.2 620.9 737.0 620.4 748.8 620.0 760.6 620.6 772.4 620.9 784.2 621.8 796.0 623.4 807.8 622.9 819.6 621.5 831.4 621.9 843.2 621.5 855.0 621.9 866.8 622.1 878.6 620.9 890.4 619.5 902.2 619.2 914.0 619.7 925.8 622.0 937.6 622.2 949.3 622.0 961.1 621.2 972.9 620.9 984.7 621.9 996.5 623.5 1008.3 623.3 1020.1 621.4 1031.9 621.1 1043.7 621.1 1055.5 620.0 1067.3 621.1 1079.1 621.5 1090.9 620.9 1102.7 620.8 1114.5 621.1" stroke="#0072bd" stroke-width="0.7" fill="none"/>
<path d="M418.5 621.7 430.3 622.8 442.1 623.1 453.9 622.5 465.7 621.3 477.5 620.6 489.3 620.1 501.1 620.0 512.9 621.7 524.7 620.9 536.5 621.5 548.3 619.7 560.1 620.1 571.9 621.2 583.7 622.8 595.4 622.1 607.2 622.2 619.0 622.2 630.8 621.1 642.6 622.1 654.4 622.1 666.2 621.5 678.0 620.7 689.8 620.6 701.6 619.4 713.4 621.3 725.2 621.0 737.0 621.5 748.8 621.1 760.6 621.1 772.4 622.2 784.2 622.0 796.0 622.5 807.8 623.4 819.6 621.3 831.4 622.2 843.2 621.4 855.0 622.6 866.8 621.4 878.6 621.4 890.4 620.2 902.2 620.8 914.0 619.5 925.8 621.0 937.6 622.7 949.3 621.1 961.1 620.5 972.9 621.8 984.7 622.2 996.5 622.6 1008.3 622.8 1020.1 621.7 1031.9 619.8 1043.7 620.5 1055.5 620.4 1067.3 620.8 1079.1 621.2 1090.9 619.6 1102.7 620.4 1114.5 620.1" stroke="#0072bd" stroke-width="0.7" fill="none"/>
<path d="M712 619.0 L766 628.5 L833 620.0" stroke="#0072bd" stroke-width="0.8" fill="none"/>
<path d="M712 619.6 L766 629.8 L833 620.5" stroke="#0072bd" stroke-width="0.8" fill="none"/>
<path d="M712 620.2 L766 631.1 L833 621.0" stroke="#0072bd" stroke-width="0.8" fill="none"/>
<path d="M712 620.8 L766 632.4 L833 621.5" stroke="#0072bd" stroke-width="0.8" fill="none"/>
<rect x="418.5" y="597.5" width="696.0" height="39.0" fill="none" stroke="#1a1a1a" stroke-width="2"/>
<text x="418.5" y="652.7" font-size="12" fill="#404040" text-anchor="middle">0</text>
<text x="534.5" y="652.7" font-size="12" fill="#404040" text-anchor="middle">0.2</text>
<text x="650.5" y="652.7" font-size="12" fill="#404040" text-anchor="middle">0.4</text>
<text x="766.5" y="652.7" font-size="12" fill="#404040" text-anchor="middle">0.6</text>
<text x="882.5" y="652.7" font-size="12" fill="#404040" text-anchor="middle">0.8</text>
<text x="998.5" y="652.7" font-size="12" fill="#404040" text-anchor="middle">1</text>
<text x="1114.5" y="652.7" font-size="12" fill="#404040" text-anchor="middle">1.2</text>
<text x="1114.8" y="667.5" font-size="12" fill="#404040" text-anchor="end">sec</text>
<rect x="414.5" y="613.8" width="7.6" height="7.6" fill="#1a1a1a"/>
<rect x="416.5" y="615.8" width="3.6" height="3.6" fill="#c46a64"/>
<rect x="1110.9" y="613.8" width="7.6" height="7.6" fill="#1a1a1a"/>
<rect x="1112.9" y="615.8" width="3.6" height="3.6" fill="#c46a64"/>
<text x="427.2" y="681.8" font-size="12" fill="#1a1a1a">Scale</text>
<circle cx="491.9" cy="677.7" r="6.4" fill="#fff" stroke="#505050" stroke-width="1"/>
<text x="502" y="681.8" font-size="12" fill="#1a1a1a">ms</text>
<circle cx="537.9" cy="677.7" r="6.4" fill="#fff" stroke="#505050" stroke-width="1"/>
<circle cx="537.9" cy="677.7" r="3.2" fill="#1a1a1a"/>
<text x="547.9" y="681.8" font-size="12" fill="#1a1a1a">s</text>
</svg>
</body></html>
